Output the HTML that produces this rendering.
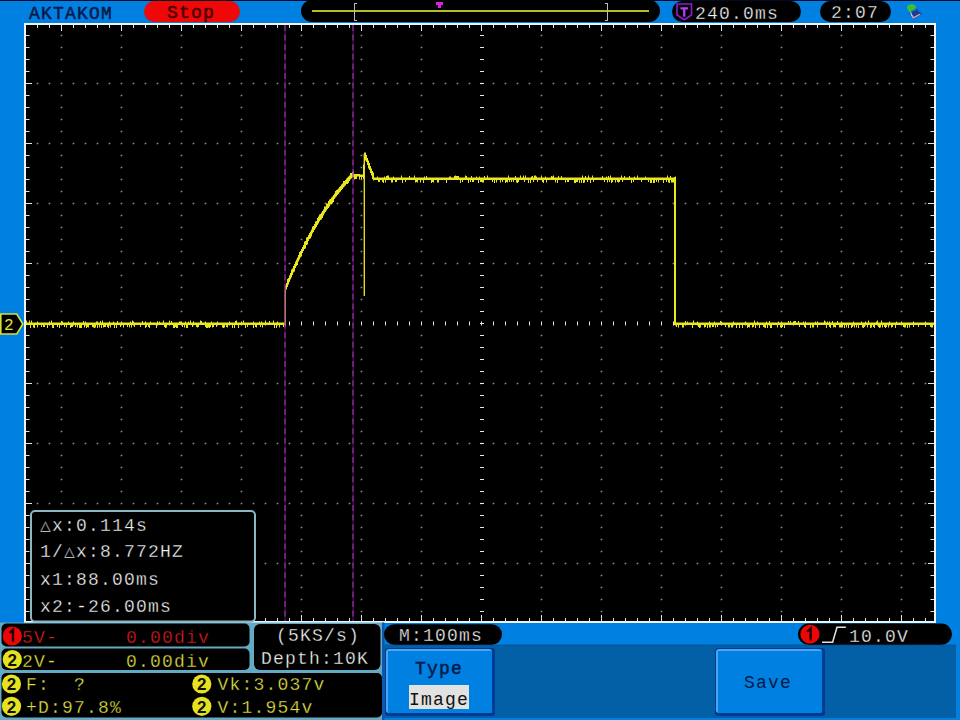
<!DOCTYPE html>
<html><head><meta charset="utf-8"><style>
html,body{margin:0;padding:0;width:960px;height:720px;overflow:hidden;background:#0080e0;}
svg{position:absolute;left:0;top:0;}
text{font-family:"Liberation Mono",monospace;font-size:18px;letter-spacing:1.2px;}
</style></head><body>
<svg width="960" height="720" viewBox="0 0 960 720">
<rect x="0" y="0" width="960" height="720" fill="#0080e0"/>
<rect x="0" y="0" width="960" height="1" fill="#000a24"/>
<!-- top bar -->
<text x="29" y="19" fill="#06184a" stroke="#06184a" stroke-width="0.5" xml:space="preserve">AKTAKOM</text>
<rect x="144" y="1" width="96" height="21" rx="10.5" fill="#ee0808"/>
<text x="167" y="18" fill="#480000" stroke="#480000" stroke-width="0.5" xml:space="preserve">Stop</text>
<rect x="301" y="0" width="359" height="22" rx="11" fill="#000"/>
<rect x="312" y="10" width="337" height="2" fill="#b4bc28"/>
<path d="M354 3h3v1h-2v16h2v1h-3z" fill="#bcbcbc"/>
<path d="M605 3h3v18h-3v-1h2v-16h-2z" fill="#bcbcbc"/>
<path d="M436 2h7v3h-2v3h-3v-3h-2z" fill="#e020e0"/>
<rect x="672" y="1" width="129" height="21" rx="10.5" fill="#000"/>
<path d="M677 4h14.5v11l-7.25 4.8l-7.25-4.8z" fill="none" stroke="#8a1cc8" stroke-width="1.7"/>
<path d="M680.5 7.2h7.5v2.2h-2.6v7.4h-2.3v-7.4h-2.6z" fill="#b040f0"/>
<text x="695" y="19" fill="#f2f2f2" stroke="#000" stroke-width="0.3" xml:space="preserve">240.0ms</text>
<rect x="820" y="1" width="71" height="21" rx="10.5" fill="#000"/>
<text x="831" y="18" fill="#f2f2f2" stroke="#000" stroke-width="0.3" xml:space="preserve">2:07</text>
<path d="M909.5 13L917 9.5L921.5 14L913 19z" fill="#1c3c8c" stroke="#1a58b8" stroke-width="1.2"/>
<path d="M911 13.8L913.2 17.8L920 14.2" fill="none" stroke="#d8a8bc" stroke-width="1.3"/>
<path d="M910.2 11L912.2 16.5" fill="none" stroke="#b8d8e0" stroke-width="1"/>
<path d="M907 6.5Q908.5 3.8 912 4.3Q915.5 4 916 7Q915 10.2 911.5 10.5L910.3 12.5Q907 10.5 907 6.5z" fill="#3cc030"/>
<!-- screen -->
<rect x="24" y="23" width="912" height="600" fill="#f2f2f2"/>
<rect x="26" y="25" width="908" height="596" fill="#000"/>
<path d="M60.65 34.65h1.7v1.7h-1.7zM60.65 46.65h1.7v1.7h-1.7zM60.65 58.65h1.7v1.7h-1.7zM60.65 70.65h1.7v1.7h-1.7zM60.65 94.65h1.7v1.7h-1.7zM60.65 106.65h1.7v1.7h-1.7zM60.65 118.65h1.7v1.7h-1.7zM60.65 130.65h1.7v1.7h-1.7zM60.65 154.65h1.7v1.7h-1.7zM60.65 166.65h1.7v1.7h-1.7zM60.65 178.65h1.7v1.7h-1.7zM60.65 190.65h1.7v1.7h-1.7zM60.65 214.65h1.7v1.7h-1.7zM60.65 226.65h1.7v1.7h-1.7zM60.65 238.65h1.7v1.7h-1.7zM60.65 250.65h1.7v1.7h-1.7zM60.65 274.65h1.7v1.7h-1.7zM60.65 286.65h1.7v1.7h-1.7zM60.65 298.65h1.7v1.7h-1.7zM60.65 310.65h1.7v1.7h-1.7zM60.65 334.65h1.7v1.7h-1.7zM60.65 346.65h1.7v1.7h-1.7zM60.65 358.65h1.7v1.7h-1.7zM60.65 370.65h1.7v1.7h-1.7zM60.65 394.65h1.7v1.7h-1.7zM60.65 406.65h1.7v1.7h-1.7zM60.65 418.65h1.7v1.7h-1.7zM60.65 430.65h1.7v1.7h-1.7zM60.65 454.65h1.7v1.7h-1.7zM60.65 466.65h1.7v1.7h-1.7zM60.65 478.65h1.7v1.7h-1.7zM60.65 490.65h1.7v1.7h-1.7zM60.65 514.65h1.7v1.7h-1.7zM60.65 526.65h1.7v1.7h-1.7zM60.65 538.65h1.7v1.7h-1.7zM60.65 550.65h1.7v1.7h-1.7zM60.65 574.65h1.7v1.7h-1.7zM60.65 586.65h1.7v1.7h-1.7zM60.65 598.65h1.7v1.7h-1.7zM60.65 610.65h1.7v1.7h-1.7zM120.65 34.65h1.7v1.7h-1.7zM120.65 46.65h1.7v1.7h-1.7zM120.65 58.65h1.7v1.7h-1.7zM120.65 70.65h1.7v1.7h-1.7zM120.65 94.65h1.7v1.7h-1.7zM120.65 106.65h1.7v1.7h-1.7zM120.65 118.65h1.7v1.7h-1.7zM120.65 130.65h1.7v1.7h-1.7zM120.65 154.65h1.7v1.7h-1.7zM120.65 166.65h1.7v1.7h-1.7zM120.65 178.65h1.7v1.7h-1.7zM120.65 190.65h1.7v1.7h-1.7zM120.65 214.65h1.7v1.7h-1.7zM120.65 226.65h1.7v1.7h-1.7zM120.65 238.65h1.7v1.7h-1.7zM120.65 250.65h1.7v1.7h-1.7zM120.65 274.65h1.7v1.7h-1.7zM120.65 286.65h1.7v1.7h-1.7zM120.65 298.65h1.7v1.7h-1.7zM120.65 310.65h1.7v1.7h-1.7zM120.65 334.65h1.7v1.7h-1.7zM120.65 346.65h1.7v1.7h-1.7zM120.65 358.65h1.7v1.7h-1.7zM120.65 370.65h1.7v1.7h-1.7zM120.65 394.65h1.7v1.7h-1.7zM120.65 406.65h1.7v1.7h-1.7zM120.65 418.65h1.7v1.7h-1.7zM120.65 430.65h1.7v1.7h-1.7zM120.65 454.65h1.7v1.7h-1.7zM120.65 466.65h1.7v1.7h-1.7zM120.65 478.65h1.7v1.7h-1.7zM120.65 490.65h1.7v1.7h-1.7zM120.65 514.65h1.7v1.7h-1.7zM120.65 526.65h1.7v1.7h-1.7zM120.65 538.65h1.7v1.7h-1.7zM120.65 550.65h1.7v1.7h-1.7zM120.65 574.65h1.7v1.7h-1.7zM120.65 586.65h1.7v1.7h-1.7zM120.65 598.65h1.7v1.7h-1.7zM120.65 610.65h1.7v1.7h-1.7zM180.65 34.65h1.7v1.7h-1.7zM180.65 46.65h1.7v1.7h-1.7zM180.65 58.65h1.7v1.7h-1.7zM180.65 70.65h1.7v1.7h-1.7zM180.65 94.65h1.7v1.7h-1.7zM180.65 106.65h1.7v1.7h-1.7zM180.65 118.65h1.7v1.7h-1.7zM180.65 130.65h1.7v1.7h-1.7zM180.65 154.65h1.7v1.7h-1.7zM180.65 166.65h1.7v1.7h-1.7zM180.65 178.65h1.7v1.7h-1.7zM180.65 190.65h1.7v1.7h-1.7zM180.65 214.65h1.7v1.7h-1.7zM180.65 226.65h1.7v1.7h-1.7zM180.65 238.65h1.7v1.7h-1.7zM180.65 250.65h1.7v1.7h-1.7zM180.65 274.65h1.7v1.7h-1.7zM180.65 286.65h1.7v1.7h-1.7zM180.65 298.65h1.7v1.7h-1.7zM180.65 310.65h1.7v1.7h-1.7zM180.65 334.65h1.7v1.7h-1.7zM180.65 346.65h1.7v1.7h-1.7zM180.65 358.65h1.7v1.7h-1.7zM180.65 370.65h1.7v1.7h-1.7zM180.65 394.65h1.7v1.7h-1.7zM180.65 406.65h1.7v1.7h-1.7zM180.65 418.65h1.7v1.7h-1.7zM180.65 430.65h1.7v1.7h-1.7zM180.65 454.65h1.7v1.7h-1.7zM180.65 466.65h1.7v1.7h-1.7zM180.65 478.65h1.7v1.7h-1.7zM180.65 490.65h1.7v1.7h-1.7zM180.65 514.65h1.7v1.7h-1.7zM180.65 526.65h1.7v1.7h-1.7zM180.65 538.65h1.7v1.7h-1.7zM180.65 550.65h1.7v1.7h-1.7zM180.65 574.65h1.7v1.7h-1.7zM180.65 586.65h1.7v1.7h-1.7zM180.65 598.65h1.7v1.7h-1.7zM180.65 610.65h1.7v1.7h-1.7zM240.65 34.65h1.7v1.7h-1.7zM240.65 46.65h1.7v1.7h-1.7zM240.65 58.65h1.7v1.7h-1.7zM240.65 70.65h1.7v1.7h-1.7zM240.65 94.65h1.7v1.7h-1.7zM240.65 106.65h1.7v1.7h-1.7zM240.65 118.65h1.7v1.7h-1.7zM240.65 130.65h1.7v1.7h-1.7zM240.65 154.65h1.7v1.7h-1.7zM240.65 166.65h1.7v1.7h-1.7zM240.65 178.65h1.7v1.7h-1.7zM240.65 190.65h1.7v1.7h-1.7zM240.65 214.65h1.7v1.7h-1.7zM240.65 226.65h1.7v1.7h-1.7zM240.65 238.65h1.7v1.7h-1.7zM240.65 250.65h1.7v1.7h-1.7zM240.65 274.65h1.7v1.7h-1.7zM240.65 286.65h1.7v1.7h-1.7zM240.65 298.65h1.7v1.7h-1.7zM240.65 310.65h1.7v1.7h-1.7zM240.65 334.65h1.7v1.7h-1.7zM240.65 346.65h1.7v1.7h-1.7zM240.65 358.65h1.7v1.7h-1.7zM240.65 370.65h1.7v1.7h-1.7zM240.65 394.65h1.7v1.7h-1.7zM240.65 406.65h1.7v1.7h-1.7zM240.65 418.65h1.7v1.7h-1.7zM240.65 430.65h1.7v1.7h-1.7zM240.65 454.65h1.7v1.7h-1.7zM240.65 466.65h1.7v1.7h-1.7zM240.65 478.65h1.7v1.7h-1.7zM240.65 490.65h1.7v1.7h-1.7zM240.65 514.65h1.7v1.7h-1.7zM240.65 526.65h1.7v1.7h-1.7zM240.65 538.65h1.7v1.7h-1.7zM240.65 550.65h1.7v1.7h-1.7zM240.65 574.65h1.7v1.7h-1.7zM240.65 586.65h1.7v1.7h-1.7zM240.65 598.65h1.7v1.7h-1.7zM240.65 610.65h1.7v1.7h-1.7zM300.65 34.65h1.7v1.7h-1.7zM300.65 46.65h1.7v1.7h-1.7zM300.65 58.65h1.7v1.7h-1.7zM300.65 70.65h1.7v1.7h-1.7zM300.65 94.65h1.7v1.7h-1.7zM300.65 106.65h1.7v1.7h-1.7zM300.65 118.65h1.7v1.7h-1.7zM300.65 130.65h1.7v1.7h-1.7zM300.65 154.65h1.7v1.7h-1.7zM300.65 166.65h1.7v1.7h-1.7zM300.65 178.65h1.7v1.7h-1.7zM300.65 190.65h1.7v1.7h-1.7zM300.65 214.65h1.7v1.7h-1.7zM300.65 226.65h1.7v1.7h-1.7zM300.65 238.65h1.7v1.7h-1.7zM300.65 250.65h1.7v1.7h-1.7zM300.65 274.65h1.7v1.7h-1.7zM300.65 286.65h1.7v1.7h-1.7zM300.65 298.65h1.7v1.7h-1.7zM300.65 310.65h1.7v1.7h-1.7zM300.65 334.65h1.7v1.7h-1.7zM300.65 346.65h1.7v1.7h-1.7zM300.65 358.65h1.7v1.7h-1.7zM300.65 370.65h1.7v1.7h-1.7zM300.65 394.65h1.7v1.7h-1.7zM300.65 406.65h1.7v1.7h-1.7zM300.65 418.65h1.7v1.7h-1.7zM300.65 430.65h1.7v1.7h-1.7zM300.65 454.65h1.7v1.7h-1.7zM300.65 466.65h1.7v1.7h-1.7zM300.65 478.65h1.7v1.7h-1.7zM300.65 490.65h1.7v1.7h-1.7zM300.65 514.65h1.7v1.7h-1.7zM300.65 526.65h1.7v1.7h-1.7zM300.65 538.65h1.7v1.7h-1.7zM300.65 550.65h1.7v1.7h-1.7zM300.65 574.65h1.7v1.7h-1.7zM300.65 586.65h1.7v1.7h-1.7zM300.65 598.65h1.7v1.7h-1.7zM300.65 610.65h1.7v1.7h-1.7zM360.65 34.65h1.7v1.7h-1.7zM360.65 46.65h1.7v1.7h-1.7zM360.65 58.65h1.7v1.7h-1.7zM360.65 70.65h1.7v1.7h-1.7zM360.65 94.65h1.7v1.7h-1.7zM360.65 106.65h1.7v1.7h-1.7zM360.65 118.65h1.7v1.7h-1.7zM360.65 130.65h1.7v1.7h-1.7zM360.65 154.65h1.7v1.7h-1.7zM360.65 166.65h1.7v1.7h-1.7zM360.65 178.65h1.7v1.7h-1.7zM360.65 190.65h1.7v1.7h-1.7zM360.65 214.65h1.7v1.7h-1.7zM360.65 226.65h1.7v1.7h-1.7zM360.65 238.65h1.7v1.7h-1.7zM360.65 250.65h1.7v1.7h-1.7zM360.65 274.65h1.7v1.7h-1.7zM360.65 286.65h1.7v1.7h-1.7zM360.65 298.65h1.7v1.7h-1.7zM360.65 310.65h1.7v1.7h-1.7zM360.65 334.65h1.7v1.7h-1.7zM360.65 346.65h1.7v1.7h-1.7zM360.65 358.65h1.7v1.7h-1.7zM360.65 370.65h1.7v1.7h-1.7zM360.65 394.65h1.7v1.7h-1.7zM360.65 406.65h1.7v1.7h-1.7zM360.65 418.65h1.7v1.7h-1.7zM360.65 430.65h1.7v1.7h-1.7zM360.65 454.65h1.7v1.7h-1.7zM360.65 466.65h1.7v1.7h-1.7zM360.65 478.65h1.7v1.7h-1.7zM360.65 490.65h1.7v1.7h-1.7zM360.65 514.65h1.7v1.7h-1.7zM360.65 526.65h1.7v1.7h-1.7zM360.65 538.65h1.7v1.7h-1.7zM360.65 550.65h1.7v1.7h-1.7zM360.65 574.65h1.7v1.7h-1.7zM360.65 586.65h1.7v1.7h-1.7zM360.65 598.65h1.7v1.7h-1.7zM360.65 610.65h1.7v1.7h-1.7zM420.65 34.65h1.7v1.7h-1.7zM420.65 46.65h1.7v1.7h-1.7zM420.65 58.65h1.7v1.7h-1.7zM420.65 70.65h1.7v1.7h-1.7zM420.65 94.65h1.7v1.7h-1.7zM420.65 106.65h1.7v1.7h-1.7zM420.65 118.65h1.7v1.7h-1.7zM420.65 130.65h1.7v1.7h-1.7zM420.65 154.65h1.7v1.7h-1.7zM420.65 166.65h1.7v1.7h-1.7zM420.65 178.65h1.7v1.7h-1.7zM420.65 190.65h1.7v1.7h-1.7zM420.65 214.65h1.7v1.7h-1.7zM420.65 226.65h1.7v1.7h-1.7zM420.65 238.65h1.7v1.7h-1.7zM420.65 250.65h1.7v1.7h-1.7zM420.65 274.65h1.7v1.7h-1.7zM420.65 286.65h1.7v1.7h-1.7zM420.65 298.65h1.7v1.7h-1.7zM420.65 310.65h1.7v1.7h-1.7zM420.65 334.65h1.7v1.7h-1.7zM420.65 346.65h1.7v1.7h-1.7zM420.65 358.65h1.7v1.7h-1.7zM420.65 370.65h1.7v1.7h-1.7zM420.65 394.65h1.7v1.7h-1.7zM420.65 406.65h1.7v1.7h-1.7zM420.65 418.65h1.7v1.7h-1.7zM420.65 430.65h1.7v1.7h-1.7zM420.65 454.65h1.7v1.7h-1.7zM420.65 466.65h1.7v1.7h-1.7zM420.65 478.65h1.7v1.7h-1.7zM420.65 490.65h1.7v1.7h-1.7zM420.65 514.65h1.7v1.7h-1.7zM420.65 526.65h1.7v1.7h-1.7zM420.65 538.65h1.7v1.7h-1.7zM420.65 550.65h1.7v1.7h-1.7zM420.65 574.65h1.7v1.7h-1.7zM420.65 586.65h1.7v1.7h-1.7zM420.65 598.65h1.7v1.7h-1.7zM420.65 610.65h1.7v1.7h-1.7zM540.65 34.65h1.7v1.7h-1.7zM540.65 46.65h1.7v1.7h-1.7zM540.65 58.65h1.7v1.7h-1.7zM540.65 70.65h1.7v1.7h-1.7zM540.65 94.65h1.7v1.7h-1.7zM540.65 106.65h1.7v1.7h-1.7zM540.65 118.65h1.7v1.7h-1.7zM540.65 130.65h1.7v1.7h-1.7zM540.65 154.65h1.7v1.7h-1.7zM540.65 166.65h1.7v1.7h-1.7zM540.65 178.65h1.7v1.7h-1.7zM540.65 190.65h1.7v1.7h-1.7zM540.65 214.65h1.7v1.7h-1.7zM540.65 226.65h1.7v1.7h-1.7zM540.65 238.65h1.7v1.7h-1.7zM540.65 250.65h1.7v1.7h-1.7zM540.65 274.65h1.7v1.7h-1.7zM540.65 286.65h1.7v1.7h-1.7zM540.65 298.65h1.7v1.7h-1.7zM540.65 310.65h1.7v1.7h-1.7zM540.65 334.65h1.7v1.7h-1.7zM540.65 346.65h1.7v1.7h-1.7zM540.65 358.65h1.7v1.7h-1.7zM540.65 370.65h1.7v1.7h-1.7zM540.65 394.65h1.7v1.7h-1.7zM540.65 406.65h1.7v1.7h-1.7zM540.65 418.65h1.7v1.7h-1.7zM540.65 430.65h1.7v1.7h-1.7zM540.65 454.65h1.7v1.7h-1.7zM540.65 466.65h1.7v1.7h-1.7zM540.65 478.65h1.7v1.7h-1.7zM540.65 490.65h1.7v1.7h-1.7zM540.65 514.65h1.7v1.7h-1.7zM540.65 526.65h1.7v1.7h-1.7zM540.65 538.65h1.7v1.7h-1.7zM540.65 550.65h1.7v1.7h-1.7zM540.65 574.65h1.7v1.7h-1.7zM540.65 586.65h1.7v1.7h-1.7zM540.65 598.65h1.7v1.7h-1.7zM540.65 610.65h1.7v1.7h-1.7zM600.65 34.65h1.7v1.7h-1.7zM600.65 46.65h1.7v1.7h-1.7zM600.65 58.65h1.7v1.7h-1.7zM600.65 70.65h1.7v1.7h-1.7zM600.65 94.65h1.7v1.7h-1.7zM600.65 106.65h1.7v1.7h-1.7zM600.65 118.65h1.7v1.7h-1.7zM600.65 130.65h1.7v1.7h-1.7zM600.65 154.65h1.7v1.7h-1.7zM600.65 166.65h1.7v1.7h-1.7zM600.65 178.65h1.7v1.7h-1.7zM600.65 190.65h1.7v1.7h-1.7zM600.65 214.65h1.7v1.7h-1.7zM600.65 226.65h1.7v1.7h-1.7zM600.65 238.65h1.7v1.7h-1.7zM600.65 250.65h1.7v1.7h-1.7zM600.65 274.65h1.7v1.7h-1.7zM600.65 286.65h1.7v1.7h-1.7zM600.65 298.65h1.7v1.7h-1.7zM600.65 310.65h1.7v1.7h-1.7zM600.65 334.65h1.7v1.7h-1.7zM600.65 346.65h1.7v1.7h-1.7zM600.65 358.65h1.7v1.7h-1.7zM600.65 370.65h1.7v1.7h-1.7zM600.65 394.65h1.7v1.7h-1.7zM600.65 406.65h1.7v1.7h-1.7zM600.65 418.65h1.7v1.7h-1.7zM600.65 430.65h1.7v1.7h-1.7zM600.65 454.65h1.7v1.7h-1.7zM600.65 466.65h1.7v1.7h-1.7zM600.65 478.65h1.7v1.7h-1.7zM600.65 490.65h1.7v1.7h-1.7zM600.65 514.65h1.7v1.7h-1.7zM600.65 526.65h1.7v1.7h-1.7zM600.65 538.65h1.7v1.7h-1.7zM600.65 550.65h1.7v1.7h-1.7zM600.65 574.65h1.7v1.7h-1.7zM600.65 586.65h1.7v1.7h-1.7zM600.65 598.65h1.7v1.7h-1.7zM600.65 610.65h1.7v1.7h-1.7zM660.65 34.65h1.7v1.7h-1.7zM660.65 46.65h1.7v1.7h-1.7zM660.65 58.65h1.7v1.7h-1.7zM660.65 70.65h1.7v1.7h-1.7zM660.65 94.65h1.7v1.7h-1.7zM660.65 106.65h1.7v1.7h-1.7zM660.65 118.65h1.7v1.7h-1.7zM660.65 130.65h1.7v1.7h-1.7zM660.65 154.65h1.7v1.7h-1.7zM660.65 166.65h1.7v1.7h-1.7zM660.65 178.65h1.7v1.7h-1.7zM660.65 190.65h1.7v1.7h-1.7zM660.65 214.65h1.7v1.7h-1.7zM660.65 226.65h1.7v1.7h-1.7zM660.65 238.65h1.7v1.7h-1.7zM660.65 250.65h1.7v1.7h-1.7zM660.65 274.65h1.7v1.7h-1.7zM660.65 286.65h1.7v1.7h-1.7zM660.65 298.65h1.7v1.7h-1.7zM660.65 310.65h1.7v1.7h-1.7zM660.65 334.65h1.7v1.7h-1.7zM660.65 346.65h1.7v1.7h-1.7zM660.65 358.65h1.7v1.7h-1.7zM660.65 370.65h1.7v1.7h-1.7zM660.65 394.65h1.7v1.7h-1.7zM660.65 406.65h1.7v1.7h-1.7zM660.65 418.65h1.7v1.7h-1.7zM660.65 430.65h1.7v1.7h-1.7zM660.65 454.65h1.7v1.7h-1.7zM660.65 466.65h1.7v1.7h-1.7zM660.65 478.65h1.7v1.7h-1.7zM660.65 490.65h1.7v1.7h-1.7zM660.65 514.65h1.7v1.7h-1.7zM660.65 526.65h1.7v1.7h-1.7zM660.65 538.65h1.7v1.7h-1.7zM660.65 550.65h1.7v1.7h-1.7zM660.65 574.65h1.7v1.7h-1.7zM660.65 586.65h1.7v1.7h-1.7zM660.65 598.65h1.7v1.7h-1.7zM660.65 610.65h1.7v1.7h-1.7zM720.65 34.65h1.7v1.7h-1.7zM720.65 46.65h1.7v1.7h-1.7zM720.65 58.65h1.7v1.7h-1.7zM720.65 70.65h1.7v1.7h-1.7zM720.65 94.65h1.7v1.7h-1.7zM720.65 106.65h1.7v1.7h-1.7zM720.65 118.65h1.7v1.7h-1.7zM720.65 130.65h1.7v1.7h-1.7zM720.65 154.65h1.7v1.7h-1.7zM720.65 166.65h1.7v1.7h-1.7zM720.65 178.65h1.7v1.7h-1.7zM720.65 190.65h1.7v1.7h-1.7zM720.65 214.65h1.7v1.7h-1.7zM720.65 226.65h1.7v1.7h-1.7zM720.65 238.65h1.7v1.7h-1.7zM720.65 250.65h1.7v1.7h-1.7zM720.65 274.65h1.7v1.7h-1.7zM720.65 286.65h1.7v1.7h-1.7zM720.65 298.65h1.7v1.7h-1.7zM720.65 310.65h1.7v1.7h-1.7zM720.65 334.65h1.7v1.7h-1.7zM720.65 346.65h1.7v1.7h-1.7zM720.65 358.65h1.7v1.7h-1.7zM720.65 370.65h1.7v1.7h-1.7zM720.65 394.65h1.7v1.7h-1.7zM720.65 406.65h1.7v1.7h-1.7zM720.65 418.65h1.7v1.7h-1.7zM720.65 430.65h1.7v1.7h-1.7zM720.65 454.65h1.7v1.7h-1.7zM720.65 466.65h1.7v1.7h-1.7zM720.65 478.65h1.7v1.7h-1.7zM720.65 490.65h1.7v1.7h-1.7zM720.65 514.65h1.7v1.7h-1.7zM720.65 526.65h1.7v1.7h-1.7zM720.65 538.65h1.7v1.7h-1.7zM720.65 550.65h1.7v1.7h-1.7zM720.65 574.65h1.7v1.7h-1.7zM720.65 586.65h1.7v1.7h-1.7zM720.65 598.65h1.7v1.7h-1.7zM720.65 610.65h1.7v1.7h-1.7zM780.65 34.65h1.7v1.7h-1.7zM780.65 46.65h1.7v1.7h-1.7zM780.65 58.65h1.7v1.7h-1.7zM780.65 70.65h1.7v1.7h-1.7zM780.65 94.65h1.7v1.7h-1.7zM780.65 106.65h1.7v1.7h-1.7zM780.65 118.65h1.7v1.7h-1.7zM780.65 130.65h1.7v1.7h-1.7zM780.65 154.65h1.7v1.7h-1.7zM780.65 166.65h1.7v1.7h-1.7zM780.65 178.65h1.7v1.7h-1.7zM780.65 190.65h1.7v1.7h-1.7zM780.65 214.65h1.7v1.7h-1.7zM780.65 226.65h1.7v1.7h-1.7zM780.65 238.65h1.7v1.7h-1.7zM780.65 250.65h1.7v1.7h-1.7zM780.65 274.65h1.7v1.7h-1.7zM780.65 286.65h1.7v1.7h-1.7zM780.65 298.65h1.7v1.7h-1.7zM780.65 310.65h1.7v1.7h-1.7zM780.65 334.65h1.7v1.7h-1.7zM780.65 346.65h1.7v1.7h-1.7zM780.65 358.65h1.7v1.7h-1.7zM780.65 370.65h1.7v1.7h-1.7zM780.65 394.65h1.7v1.7h-1.7zM780.65 406.65h1.7v1.7h-1.7zM780.65 418.65h1.7v1.7h-1.7zM780.65 430.65h1.7v1.7h-1.7zM780.65 454.65h1.7v1.7h-1.7zM780.65 466.65h1.7v1.7h-1.7zM780.65 478.65h1.7v1.7h-1.7zM780.65 490.65h1.7v1.7h-1.7zM780.65 514.65h1.7v1.7h-1.7zM780.65 526.65h1.7v1.7h-1.7zM780.65 538.65h1.7v1.7h-1.7zM780.65 550.65h1.7v1.7h-1.7zM780.65 574.65h1.7v1.7h-1.7zM780.65 586.65h1.7v1.7h-1.7zM780.65 598.65h1.7v1.7h-1.7zM780.65 610.65h1.7v1.7h-1.7zM840.65 34.65h1.7v1.7h-1.7zM840.65 46.65h1.7v1.7h-1.7zM840.65 58.65h1.7v1.7h-1.7zM840.65 70.65h1.7v1.7h-1.7zM840.65 94.65h1.7v1.7h-1.7zM840.65 106.65h1.7v1.7h-1.7zM840.65 118.65h1.7v1.7h-1.7zM840.65 130.65h1.7v1.7h-1.7zM840.65 154.65h1.7v1.7h-1.7zM840.65 166.65h1.7v1.7h-1.7zM840.65 178.65h1.7v1.7h-1.7zM840.65 190.65h1.7v1.7h-1.7zM840.65 214.65h1.7v1.7h-1.7zM840.65 226.65h1.7v1.7h-1.7zM840.65 238.65h1.7v1.7h-1.7zM840.65 250.65h1.7v1.7h-1.7zM840.65 274.65h1.7v1.7h-1.7zM840.65 286.65h1.7v1.7h-1.7zM840.65 298.65h1.7v1.7h-1.7zM840.65 310.65h1.7v1.7h-1.7zM840.65 334.65h1.7v1.7h-1.7zM840.65 346.65h1.7v1.7h-1.7zM840.65 358.65h1.7v1.7h-1.7zM840.65 370.65h1.7v1.7h-1.7zM840.65 394.65h1.7v1.7h-1.7zM840.65 406.65h1.7v1.7h-1.7zM840.65 418.65h1.7v1.7h-1.7zM840.65 430.65h1.7v1.7h-1.7zM840.65 454.65h1.7v1.7h-1.7zM840.65 466.65h1.7v1.7h-1.7zM840.65 478.65h1.7v1.7h-1.7zM840.65 490.65h1.7v1.7h-1.7zM840.65 514.65h1.7v1.7h-1.7zM840.65 526.65h1.7v1.7h-1.7zM840.65 538.65h1.7v1.7h-1.7zM840.65 550.65h1.7v1.7h-1.7zM840.65 574.65h1.7v1.7h-1.7zM840.65 586.65h1.7v1.7h-1.7zM840.65 598.65h1.7v1.7h-1.7zM840.65 610.65h1.7v1.7h-1.7zM900.65 34.65h1.7v1.7h-1.7zM900.65 46.65h1.7v1.7h-1.7zM900.65 58.65h1.7v1.7h-1.7zM900.65 70.65h1.7v1.7h-1.7zM900.65 94.65h1.7v1.7h-1.7zM900.65 106.65h1.7v1.7h-1.7zM900.65 118.65h1.7v1.7h-1.7zM900.65 130.65h1.7v1.7h-1.7zM900.65 154.65h1.7v1.7h-1.7zM900.65 166.65h1.7v1.7h-1.7zM900.65 178.65h1.7v1.7h-1.7zM900.65 190.65h1.7v1.7h-1.7zM900.65 214.65h1.7v1.7h-1.7zM900.65 226.65h1.7v1.7h-1.7zM900.65 238.65h1.7v1.7h-1.7zM900.65 250.65h1.7v1.7h-1.7zM900.65 274.65h1.7v1.7h-1.7zM900.65 286.65h1.7v1.7h-1.7zM900.65 298.65h1.7v1.7h-1.7zM900.65 310.65h1.7v1.7h-1.7zM900.65 334.65h1.7v1.7h-1.7zM900.65 346.65h1.7v1.7h-1.7zM900.65 358.65h1.7v1.7h-1.7zM900.65 370.65h1.7v1.7h-1.7zM900.65 394.65h1.7v1.7h-1.7zM900.65 406.65h1.7v1.7h-1.7zM900.65 418.65h1.7v1.7h-1.7zM900.65 430.65h1.7v1.7h-1.7zM900.65 454.65h1.7v1.7h-1.7zM900.65 466.65h1.7v1.7h-1.7zM900.65 478.65h1.7v1.7h-1.7zM900.65 490.65h1.7v1.7h-1.7zM900.65 514.65h1.7v1.7h-1.7zM900.65 526.65h1.7v1.7h-1.7zM900.65 538.65h1.7v1.7h-1.7zM900.65 550.65h1.7v1.7h-1.7zM900.65 574.65h1.7v1.7h-1.7zM900.65 586.65h1.7v1.7h-1.7zM900.65 598.65h1.7v1.7h-1.7zM900.65 610.65h1.7v1.7h-1.7zM36.65 82.65h1.7v1.7h-1.7zM48.65 82.65h1.7v1.7h-1.7zM60.65 82.65h1.7v1.7h-1.7zM72.65 82.65h1.7v1.7h-1.7zM84.65 82.65h1.7v1.7h-1.7zM96.65 82.65h1.7v1.7h-1.7zM108.65 82.65h1.7v1.7h-1.7zM120.65 82.65h1.7v1.7h-1.7zM132.65 82.65h1.7v1.7h-1.7zM144.65 82.65h1.7v1.7h-1.7zM156.65 82.65h1.7v1.7h-1.7zM168.65 82.65h1.7v1.7h-1.7zM180.65 82.65h1.7v1.7h-1.7zM192.65 82.65h1.7v1.7h-1.7zM204.65 82.65h1.7v1.7h-1.7zM216.65 82.65h1.7v1.7h-1.7zM228.65 82.65h1.7v1.7h-1.7zM240.65 82.65h1.7v1.7h-1.7zM252.65 82.65h1.7v1.7h-1.7zM264.65 82.65h1.7v1.7h-1.7zM276.65 82.65h1.7v1.7h-1.7zM288.65 82.65h1.7v1.7h-1.7zM300.65 82.65h1.7v1.7h-1.7zM312.65 82.65h1.7v1.7h-1.7zM324.65 82.65h1.7v1.7h-1.7zM336.65 82.65h1.7v1.7h-1.7zM348.65 82.65h1.7v1.7h-1.7zM360.65 82.65h1.7v1.7h-1.7zM372.65 82.65h1.7v1.7h-1.7zM384.65 82.65h1.7v1.7h-1.7zM396.65 82.65h1.7v1.7h-1.7zM408.65 82.65h1.7v1.7h-1.7zM420.65 82.65h1.7v1.7h-1.7zM432.65 82.65h1.7v1.7h-1.7zM444.65 82.65h1.7v1.7h-1.7zM456.65 82.65h1.7v1.7h-1.7zM468.65 82.65h1.7v1.7h-1.7zM480.65 82.65h1.7v1.7h-1.7zM492.65 82.65h1.7v1.7h-1.7zM504.65 82.65h1.7v1.7h-1.7zM516.65 82.65h1.7v1.7h-1.7zM528.65 82.65h1.7v1.7h-1.7zM540.65 82.65h1.7v1.7h-1.7zM552.65 82.65h1.7v1.7h-1.7zM564.65 82.65h1.7v1.7h-1.7zM576.65 82.65h1.7v1.7h-1.7zM588.65 82.65h1.7v1.7h-1.7zM600.65 82.65h1.7v1.7h-1.7zM612.65 82.65h1.7v1.7h-1.7zM624.65 82.65h1.7v1.7h-1.7zM636.65 82.65h1.7v1.7h-1.7zM648.65 82.65h1.7v1.7h-1.7zM660.65 82.65h1.7v1.7h-1.7zM672.65 82.65h1.7v1.7h-1.7zM684.65 82.65h1.7v1.7h-1.7zM696.65 82.65h1.7v1.7h-1.7zM708.65 82.65h1.7v1.7h-1.7zM720.65 82.65h1.7v1.7h-1.7zM732.65 82.65h1.7v1.7h-1.7zM744.65 82.65h1.7v1.7h-1.7zM756.65 82.65h1.7v1.7h-1.7zM768.65 82.65h1.7v1.7h-1.7zM780.65 82.65h1.7v1.7h-1.7zM792.65 82.65h1.7v1.7h-1.7zM804.65 82.65h1.7v1.7h-1.7zM816.65 82.65h1.7v1.7h-1.7zM828.65 82.65h1.7v1.7h-1.7zM840.65 82.65h1.7v1.7h-1.7zM852.65 82.65h1.7v1.7h-1.7zM864.65 82.65h1.7v1.7h-1.7zM876.65 82.65h1.7v1.7h-1.7zM888.65 82.65h1.7v1.7h-1.7zM900.65 82.65h1.7v1.7h-1.7zM912.65 82.65h1.7v1.7h-1.7zM924.65 82.65h1.7v1.7h-1.7zM36.65 142.65h1.7v1.7h-1.7zM48.65 142.65h1.7v1.7h-1.7zM60.65 142.65h1.7v1.7h-1.7zM72.65 142.65h1.7v1.7h-1.7zM84.65 142.65h1.7v1.7h-1.7zM96.65 142.65h1.7v1.7h-1.7zM108.65 142.65h1.7v1.7h-1.7zM120.65 142.65h1.7v1.7h-1.7zM132.65 142.65h1.7v1.7h-1.7zM144.65 142.65h1.7v1.7h-1.7zM156.65 142.65h1.7v1.7h-1.7zM168.65 142.65h1.7v1.7h-1.7zM180.65 142.65h1.7v1.7h-1.7zM192.65 142.65h1.7v1.7h-1.7zM204.65 142.65h1.7v1.7h-1.7zM216.65 142.65h1.7v1.7h-1.7zM228.65 142.65h1.7v1.7h-1.7zM240.65 142.65h1.7v1.7h-1.7zM252.65 142.65h1.7v1.7h-1.7zM264.65 142.65h1.7v1.7h-1.7zM276.65 142.65h1.7v1.7h-1.7zM288.65 142.65h1.7v1.7h-1.7zM300.65 142.65h1.7v1.7h-1.7zM312.65 142.65h1.7v1.7h-1.7zM324.65 142.65h1.7v1.7h-1.7zM336.65 142.65h1.7v1.7h-1.7zM348.65 142.65h1.7v1.7h-1.7zM360.65 142.65h1.7v1.7h-1.7zM372.65 142.65h1.7v1.7h-1.7zM384.65 142.65h1.7v1.7h-1.7zM396.65 142.65h1.7v1.7h-1.7zM408.65 142.65h1.7v1.7h-1.7zM420.65 142.65h1.7v1.7h-1.7zM432.65 142.65h1.7v1.7h-1.7zM444.65 142.65h1.7v1.7h-1.7zM456.65 142.65h1.7v1.7h-1.7zM468.65 142.65h1.7v1.7h-1.7zM480.65 142.65h1.7v1.7h-1.7zM492.65 142.65h1.7v1.7h-1.7zM504.65 142.65h1.7v1.7h-1.7zM516.65 142.65h1.7v1.7h-1.7zM528.65 142.65h1.7v1.7h-1.7zM540.65 142.65h1.7v1.7h-1.7zM552.65 142.65h1.7v1.7h-1.7zM564.65 142.65h1.7v1.7h-1.7zM576.65 142.65h1.7v1.7h-1.7zM588.65 142.65h1.7v1.7h-1.7zM600.65 142.65h1.7v1.7h-1.7zM612.65 142.65h1.7v1.7h-1.7zM624.65 142.65h1.7v1.7h-1.7zM636.65 142.65h1.7v1.7h-1.7zM648.65 142.65h1.7v1.7h-1.7zM660.65 142.65h1.7v1.7h-1.7zM672.65 142.65h1.7v1.7h-1.7zM684.65 142.65h1.7v1.7h-1.7zM696.65 142.65h1.7v1.7h-1.7zM708.65 142.65h1.7v1.7h-1.7zM720.65 142.65h1.7v1.7h-1.7zM732.65 142.65h1.7v1.7h-1.7zM744.65 142.65h1.7v1.7h-1.7zM756.65 142.65h1.7v1.7h-1.7zM768.65 142.65h1.7v1.7h-1.7zM780.65 142.65h1.7v1.7h-1.7zM792.65 142.65h1.7v1.7h-1.7zM804.65 142.65h1.7v1.7h-1.7zM816.65 142.65h1.7v1.7h-1.7zM828.65 142.65h1.7v1.7h-1.7zM840.65 142.65h1.7v1.7h-1.7zM852.65 142.65h1.7v1.7h-1.7zM864.65 142.65h1.7v1.7h-1.7zM876.65 142.65h1.7v1.7h-1.7zM888.65 142.65h1.7v1.7h-1.7zM900.65 142.65h1.7v1.7h-1.7zM912.65 142.65h1.7v1.7h-1.7zM924.65 142.65h1.7v1.7h-1.7zM36.65 202.65h1.7v1.7h-1.7zM48.65 202.65h1.7v1.7h-1.7zM60.65 202.65h1.7v1.7h-1.7zM72.65 202.65h1.7v1.7h-1.7zM84.65 202.65h1.7v1.7h-1.7zM96.65 202.65h1.7v1.7h-1.7zM108.65 202.65h1.7v1.7h-1.7zM120.65 202.65h1.7v1.7h-1.7zM132.65 202.65h1.7v1.7h-1.7zM144.65 202.65h1.7v1.7h-1.7zM156.65 202.65h1.7v1.7h-1.7zM168.65 202.65h1.7v1.7h-1.7zM180.65 202.65h1.7v1.7h-1.7zM192.65 202.65h1.7v1.7h-1.7zM204.65 202.65h1.7v1.7h-1.7zM216.65 202.65h1.7v1.7h-1.7zM228.65 202.65h1.7v1.7h-1.7zM240.65 202.65h1.7v1.7h-1.7zM252.65 202.65h1.7v1.7h-1.7zM264.65 202.65h1.7v1.7h-1.7zM276.65 202.65h1.7v1.7h-1.7zM288.65 202.65h1.7v1.7h-1.7zM300.65 202.65h1.7v1.7h-1.7zM312.65 202.65h1.7v1.7h-1.7zM324.65 202.65h1.7v1.7h-1.7zM336.65 202.65h1.7v1.7h-1.7zM348.65 202.65h1.7v1.7h-1.7zM360.65 202.65h1.7v1.7h-1.7zM372.65 202.65h1.7v1.7h-1.7zM384.65 202.65h1.7v1.7h-1.7zM396.65 202.65h1.7v1.7h-1.7zM408.65 202.65h1.7v1.7h-1.7zM420.65 202.65h1.7v1.7h-1.7zM432.65 202.65h1.7v1.7h-1.7zM444.65 202.65h1.7v1.7h-1.7zM456.65 202.65h1.7v1.7h-1.7zM468.65 202.65h1.7v1.7h-1.7zM480.65 202.65h1.7v1.7h-1.7zM492.65 202.65h1.7v1.7h-1.7zM504.65 202.65h1.7v1.7h-1.7zM516.65 202.65h1.7v1.7h-1.7zM528.65 202.65h1.7v1.7h-1.7zM540.65 202.65h1.7v1.7h-1.7zM552.65 202.65h1.7v1.7h-1.7zM564.65 202.65h1.7v1.7h-1.7zM576.65 202.65h1.7v1.7h-1.7zM588.65 202.65h1.7v1.7h-1.7zM600.65 202.65h1.7v1.7h-1.7zM612.65 202.65h1.7v1.7h-1.7zM624.65 202.65h1.7v1.7h-1.7zM636.65 202.65h1.7v1.7h-1.7zM648.65 202.65h1.7v1.7h-1.7zM660.65 202.65h1.7v1.7h-1.7zM672.65 202.65h1.7v1.7h-1.7zM684.65 202.65h1.7v1.7h-1.7zM696.65 202.65h1.7v1.7h-1.7zM708.65 202.65h1.7v1.7h-1.7zM720.65 202.65h1.7v1.7h-1.7zM732.65 202.65h1.7v1.7h-1.7zM744.65 202.65h1.7v1.7h-1.7zM756.65 202.65h1.7v1.7h-1.7zM768.65 202.65h1.7v1.7h-1.7zM780.65 202.65h1.7v1.7h-1.7zM792.65 202.65h1.7v1.7h-1.7zM804.65 202.65h1.7v1.7h-1.7zM816.65 202.65h1.7v1.7h-1.7zM828.65 202.65h1.7v1.7h-1.7zM840.65 202.65h1.7v1.7h-1.7zM852.65 202.65h1.7v1.7h-1.7zM864.65 202.65h1.7v1.7h-1.7zM876.65 202.65h1.7v1.7h-1.7zM888.65 202.65h1.7v1.7h-1.7zM900.65 202.65h1.7v1.7h-1.7zM912.65 202.65h1.7v1.7h-1.7zM924.65 202.65h1.7v1.7h-1.7zM36.65 262.65h1.7v1.7h-1.7zM48.65 262.65h1.7v1.7h-1.7zM60.65 262.65h1.7v1.7h-1.7zM72.65 262.65h1.7v1.7h-1.7zM84.65 262.65h1.7v1.7h-1.7zM96.65 262.65h1.7v1.7h-1.7zM108.65 262.65h1.7v1.7h-1.7zM120.65 262.65h1.7v1.7h-1.7zM132.65 262.65h1.7v1.7h-1.7zM144.65 262.65h1.7v1.7h-1.7zM156.65 262.65h1.7v1.7h-1.7zM168.65 262.65h1.7v1.7h-1.7zM180.65 262.65h1.7v1.7h-1.7zM192.65 262.65h1.7v1.7h-1.7zM204.65 262.65h1.7v1.7h-1.7zM216.65 262.65h1.7v1.7h-1.7zM228.65 262.65h1.7v1.7h-1.7zM240.65 262.65h1.7v1.7h-1.7zM252.65 262.65h1.7v1.7h-1.7zM264.65 262.65h1.7v1.7h-1.7zM276.65 262.65h1.7v1.7h-1.7zM288.65 262.65h1.7v1.7h-1.7zM300.65 262.65h1.7v1.7h-1.7zM312.65 262.65h1.7v1.7h-1.7zM324.65 262.65h1.7v1.7h-1.7zM336.65 262.65h1.7v1.7h-1.7zM348.65 262.65h1.7v1.7h-1.7zM360.65 262.65h1.7v1.7h-1.7zM372.65 262.65h1.7v1.7h-1.7zM384.65 262.65h1.7v1.7h-1.7zM396.65 262.65h1.7v1.7h-1.7zM408.65 262.65h1.7v1.7h-1.7zM420.65 262.65h1.7v1.7h-1.7zM432.65 262.65h1.7v1.7h-1.7zM444.65 262.65h1.7v1.7h-1.7zM456.65 262.65h1.7v1.7h-1.7zM468.65 262.65h1.7v1.7h-1.7zM480.65 262.65h1.7v1.7h-1.7zM492.65 262.65h1.7v1.7h-1.7zM504.65 262.65h1.7v1.7h-1.7zM516.65 262.65h1.7v1.7h-1.7zM528.65 262.65h1.7v1.7h-1.7zM540.65 262.65h1.7v1.7h-1.7zM552.65 262.65h1.7v1.7h-1.7zM564.65 262.65h1.7v1.7h-1.7zM576.65 262.65h1.7v1.7h-1.7zM588.65 262.65h1.7v1.7h-1.7zM600.65 262.65h1.7v1.7h-1.7zM612.65 262.65h1.7v1.7h-1.7zM624.65 262.65h1.7v1.7h-1.7zM636.65 262.65h1.7v1.7h-1.7zM648.65 262.65h1.7v1.7h-1.7zM660.65 262.65h1.7v1.7h-1.7zM672.65 262.65h1.7v1.7h-1.7zM684.65 262.65h1.7v1.7h-1.7zM696.65 262.65h1.7v1.7h-1.7zM708.65 262.65h1.7v1.7h-1.7zM720.65 262.65h1.7v1.7h-1.7zM732.65 262.65h1.7v1.7h-1.7zM744.65 262.65h1.7v1.7h-1.7zM756.65 262.65h1.7v1.7h-1.7zM768.65 262.65h1.7v1.7h-1.7zM780.65 262.65h1.7v1.7h-1.7zM792.65 262.65h1.7v1.7h-1.7zM804.65 262.65h1.7v1.7h-1.7zM816.65 262.65h1.7v1.7h-1.7zM828.65 262.65h1.7v1.7h-1.7zM840.65 262.65h1.7v1.7h-1.7zM852.65 262.65h1.7v1.7h-1.7zM864.65 262.65h1.7v1.7h-1.7zM876.65 262.65h1.7v1.7h-1.7zM888.65 262.65h1.7v1.7h-1.7zM900.65 262.65h1.7v1.7h-1.7zM912.65 262.65h1.7v1.7h-1.7zM924.65 262.65h1.7v1.7h-1.7zM36.65 382.65h1.7v1.7h-1.7zM48.65 382.65h1.7v1.7h-1.7zM60.65 382.65h1.7v1.7h-1.7zM72.65 382.65h1.7v1.7h-1.7zM84.65 382.65h1.7v1.7h-1.7zM96.65 382.65h1.7v1.7h-1.7zM108.65 382.65h1.7v1.7h-1.7zM120.65 382.65h1.7v1.7h-1.7zM132.65 382.65h1.7v1.7h-1.7zM144.65 382.65h1.7v1.7h-1.7zM156.65 382.65h1.7v1.7h-1.7zM168.65 382.65h1.7v1.7h-1.7zM180.65 382.65h1.7v1.7h-1.7zM192.65 382.65h1.7v1.7h-1.7zM204.65 382.65h1.7v1.7h-1.7zM216.65 382.65h1.7v1.7h-1.7zM228.65 382.65h1.7v1.7h-1.7zM240.65 382.65h1.7v1.7h-1.7zM252.65 382.65h1.7v1.7h-1.7zM264.65 382.65h1.7v1.7h-1.7zM276.65 382.65h1.7v1.7h-1.7zM288.65 382.65h1.7v1.7h-1.7zM300.65 382.65h1.7v1.7h-1.7zM312.65 382.65h1.7v1.7h-1.7zM324.65 382.65h1.7v1.7h-1.7zM336.65 382.65h1.7v1.7h-1.7zM348.65 382.65h1.7v1.7h-1.7zM360.65 382.65h1.7v1.7h-1.7zM372.65 382.65h1.7v1.7h-1.7zM384.65 382.65h1.7v1.7h-1.7zM396.65 382.65h1.7v1.7h-1.7zM408.65 382.65h1.7v1.7h-1.7zM420.65 382.65h1.7v1.7h-1.7zM432.65 382.65h1.7v1.7h-1.7zM444.65 382.65h1.7v1.7h-1.7zM456.65 382.65h1.7v1.7h-1.7zM468.65 382.65h1.7v1.7h-1.7zM480.65 382.65h1.7v1.7h-1.7zM492.65 382.65h1.7v1.7h-1.7zM504.65 382.65h1.7v1.7h-1.7zM516.65 382.65h1.7v1.7h-1.7zM528.65 382.65h1.7v1.7h-1.7zM540.65 382.65h1.7v1.7h-1.7zM552.65 382.65h1.7v1.7h-1.7zM564.65 382.65h1.7v1.7h-1.7zM576.65 382.65h1.7v1.7h-1.7zM588.65 382.65h1.7v1.7h-1.7zM600.65 382.65h1.7v1.7h-1.7zM612.65 382.65h1.7v1.7h-1.7zM624.65 382.65h1.7v1.7h-1.7zM636.65 382.65h1.7v1.7h-1.7zM648.65 382.65h1.7v1.7h-1.7zM660.65 382.65h1.7v1.7h-1.7zM672.65 382.65h1.7v1.7h-1.7zM684.65 382.65h1.7v1.7h-1.7zM696.65 382.65h1.7v1.7h-1.7zM708.65 382.65h1.7v1.7h-1.7zM720.65 382.65h1.7v1.7h-1.7zM732.65 382.65h1.7v1.7h-1.7zM744.65 382.65h1.7v1.7h-1.7zM756.65 382.65h1.7v1.7h-1.7zM768.65 382.65h1.7v1.7h-1.7zM780.65 382.65h1.7v1.7h-1.7zM792.65 382.65h1.7v1.7h-1.7zM804.65 382.65h1.7v1.7h-1.7zM816.65 382.65h1.7v1.7h-1.7zM828.65 382.65h1.7v1.7h-1.7zM840.65 382.65h1.7v1.7h-1.7zM852.65 382.65h1.7v1.7h-1.7zM864.65 382.65h1.7v1.7h-1.7zM876.65 382.65h1.7v1.7h-1.7zM888.65 382.65h1.7v1.7h-1.7zM900.65 382.65h1.7v1.7h-1.7zM912.65 382.65h1.7v1.7h-1.7zM924.65 382.65h1.7v1.7h-1.7zM36.65 442.65h1.7v1.7h-1.7zM48.65 442.65h1.7v1.7h-1.7zM60.65 442.65h1.7v1.7h-1.7zM72.65 442.65h1.7v1.7h-1.7zM84.65 442.65h1.7v1.7h-1.7zM96.65 442.65h1.7v1.7h-1.7zM108.65 442.65h1.7v1.7h-1.7zM120.65 442.65h1.7v1.7h-1.7zM132.65 442.65h1.7v1.7h-1.7zM144.65 442.65h1.7v1.7h-1.7zM156.65 442.65h1.7v1.7h-1.7zM168.65 442.65h1.7v1.7h-1.7zM180.65 442.65h1.7v1.7h-1.7zM192.65 442.65h1.7v1.7h-1.7zM204.65 442.65h1.7v1.7h-1.7zM216.65 442.65h1.7v1.7h-1.7zM228.65 442.65h1.7v1.7h-1.7zM240.65 442.65h1.7v1.7h-1.7zM252.65 442.65h1.7v1.7h-1.7zM264.65 442.65h1.7v1.7h-1.7zM276.65 442.65h1.7v1.7h-1.7zM288.65 442.65h1.7v1.7h-1.7zM300.65 442.65h1.7v1.7h-1.7zM312.65 442.65h1.7v1.7h-1.7zM324.65 442.65h1.7v1.7h-1.7zM336.65 442.65h1.7v1.7h-1.7zM348.65 442.65h1.7v1.7h-1.7zM360.65 442.65h1.7v1.7h-1.7zM372.65 442.65h1.7v1.7h-1.7zM384.65 442.65h1.7v1.7h-1.7zM396.65 442.65h1.7v1.7h-1.7zM408.65 442.65h1.7v1.7h-1.7zM420.65 442.65h1.7v1.7h-1.7zM432.65 442.65h1.7v1.7h-1.7zM444.65 442.65h1.7v1.7h-1.7zM456.65 442.65h1.7v1.7h-1.7zM468.65 442.65h1.7v1.7h-1.7zM480.65 442.65h1.7v1.7h-1.7zM492.65 442.65h1.7v1.7h-1.7zM504.65 442.65h1.7v1.7h-1.7zM516.65 442.65h1.7v1.7h-1.7zM528.65 442.65h1.7v1.7h-1.7zM540.65 442.65h1.7v1.7h-1.7zM552.65 442.65h1.7v1.7h-1.7zM564.65 442.65h1.7v1.7h-1.7zM576.65 442.65h1.7v1.7h-1.7zM588.65 442.65h1.7v1.7h-1.7zM600.65 442.65h1.7v1.7h-1.7zM612.65 442.65h1.7v1.7h-1.7zM624.65 442.65h1.7v1.7h-1.7zM636.65 442.65h1.7v1.7h-1.7zM648.65 442.65h1.7v1.7h-1.7zM660.65 442.65h1.7v1.7h-1.7zM672.65 442.65h1.7v1.7h-1.7zM684.65 442.65h1.7v1.7h-1.7zM696.65 442.65h1.7v1.7h-1.7zM708.65 442.65h1.7v1.7h-1.7zM720.65 442.65h1.7v1.7h-1.7zM732.65 442.65h1.7v1.7h-1.7zM744.65 442.65h1.7v1.7h-1.7zM756.65 442.65h1.7v1.7h-1.7zM768.65 442.65h1.7v1.7h-1.7zM780.65 442.65h1.7v1.7h-1.7zM792.65 442.65h1.7v1.7h-1.7zM804.65 442.65h1.7v1.7h-1.7zM816.65 442.65h1.7v1.7h-1.7zM828.65 442.65h1.7v1.7h-1.7zM840.65 442.65h1.7v1.7h-1.7zM852.65 442.65h1.7v1.7h-1.7zM864.65 442.65h1.7v1.7h-1.7zM876.65 442.65h1.7v1.7h-1.7zM888.65 442.65h1.7v1.7h-1.7zM900.65 442.65h1.7v1.7h-1.7zM912.65 442.65h1.7v1.7h-1.7zM924.65 442.65h1.7v1.7h-1.7zM36.65 502.65h1.7v1.7h-1.7zM48.65 502.65h1.7v1.7h-1.7zM60.65 502.65h1.7v1.7h-1.7zM72.65 502.65h1.7v1.7h-1.7zM84.65 502.65h1.7v1.7h-1.7zM96.65 502.65h1.7v1.7h-1.7zM108.65 502.65h1.7v1.7h-1.7zM120.65 502.65h1.7v1.7h-1.7zM132.65 502.65h1.7v1.7h-1.7zM144.65 502.65h1.7v1.7h-1.7zM156.65 502.65h1.7v1.7h-1.7zM168.65 502.65h1.7v1.7h-1.7zM180.65 502.65h1.7v1.7h-1.7zM192.65 502.65h1.7v1.7h-1.7zM204.65 502.65h1.7v1.7h-1.7zM216.65 502.65h1.7v1.7h-1.7zM228.65 502.65h1.7v1.7h-1.7zM240.65 502.65h1.7v1.7h-1.7zM252.65 502.65h1.7v1.7h-1.7zM264.65 502.65h1.7v1.7h-1.7zM276.65 502.65h1.7v1.7h-1.7zM288.65 502.65h1.7v1.7h-1.7zM300.65 502.65h1.7v1.7h-1.7zM312.65 502.65h1.7v1.7h-1.7zM324.65 502.65h1.7v1.7h-1.7zM336.65 502.65h1.7v1.7h-1.7zM348.65 502.65h1.7v1.7h-1.7zM360.65 502.65h1.7v1.7h-1.7zM372.65 502.65h1.7v1.7h-1.7zM384.65 502.65h1.7v1.7h-1.7zM396.65 502.65h1.7v1.7h-1.7zM408.65 502.65h1.7v1.7h-1.7zM420.65 502.65h1.7v1.7h-1.7zM432.65 502.65h1.7v1.7h-1.7zM444.65 502.65h1.7v1.7h-1.7zM456.65 502.65h1.7v1.7h-1.7zM468.65 502.65h1.7v1.7h-1.7zM480.65 502.65h1.7v1.7h-1.7zM492.65 502.65h1.7v1.7h-1.7zM504.65 502.65h1.7v1.7h-1.7zM516.65 502.65h1.7v1.7h-1.7zM528.65 502.65h1.7v1.7h-1.7zM540.65 502.65h1.7v1.7h-1.7zM552.65 502.65h1.7v1.7h-1.7zM564.65 502.65h1.7v1.7h-1.7zM576.65 502.65h1.7v1.7h-1.7zM588.65 502.65h1.7v1.7h-1.7zM600.65 502.65h1.7v1.7h-1.7zM612.65 502.65h1.7v1.7h-1.7zM624.65 502.65h1.7v1.7h-1.7zM636.65 502.65h1.7v1.7h-1.7zM648.65 502.65h1.7v1.7h-1.7zM660.65 502.65h1.7v1.7h-1.7zM672.65 502.65h1.7v1.7h-1.7zM684.65 502.65h1.7v1.7h-1.7zM696.65 502.65h1.7v1.7h-1.7zM708.65 502.65h1.7v1.7h-1.7zM720.65 502.65h1.7v1.7h-1.7zM732.65 502.65h1.7v1.7h-1.7zM744.65 502.65h1.7v1.7h-1.7zM756.65 502.65h1.7v1.7h-1.7zM768.65 502.65h1.7v1.7h-1.7zM780.65 502.65h1.7v1.7h-1.7zM792.65 502.65h1.7v1.7h-1.7zM804.65 502.65h1.7v1.7h-1.7zM816.65 502.65h1.7v1.7h-1.7zM828.65 502.65h1.7v1.7h-1.7zM840.65 502.65h1.7v1.7h-1.7zM852.65 502.65h1.7v1.7h-1.7zM864.65 502.65h1.7v1.7h-1.7zM876.65 502.65h1.7v1.7h-1.7zM888.65 502.65h1.7v1.7h-1.7zM900.65 502.65h1.7v1.7h-1.7zM912.65 502.65h1.7v1.7h-1.7zM924.65 502.65h1.7v1.7h-1.7zM36.65 562.65h1.7v1.7h-1.7zM48.65 562.65h1.7v1.7h-1.7zM60.65 562.65h1.7v1.7h-1.7zM72.65 562.65h1.7v1.7h-1.7zM84.65 562.65h1.7v1.7h-1.7zM96.65 562.65h1.7v1.7h-1.7zM108.65 562.65h1.7v1.7h-1.7zM120.65 562.65h1.7v1.7h-1.7zM132.65 562.65h1.7v1.7h-1.7zM144.65 562.65h1.7v1.7h-1.7zM156.65 562.65h1.7v1.7h-1.7zM168.65 562.65h1.7v1.7h-1.7zM180.65 562.65h1.7v1.7h-1.7zM192.65 562.65h1.7v1.7h-1.7zM204.65 562.65h1.7v1.7h-1.7zM216.65 562.65h1.7v1.7h-1.7zM228.65 562.65h1.7v1.7h-1.7zM240.65 562.65h1.7v1.7h-1.7zM252.65 562.65h1.7v1.7h-1.7zM264.65 562.65h1.7v1.7h-1.7zM276.65 562.65h1.7v1.7h-1.7zM288.65 562.65h1.7v1.7h-1.7zM300.65 562.65h1.7v1.7h-1.7zM312.65 562.65h1.7v1.7h-1.7zM324.65 562.65h1.7v1.7h-1.7zM336.65 562.65h1.7v1.7h-1.7zM348.65 562.65h1.7v1.7h-1.7zM360.65 562.65h1.7v1.7h-1.7zM372.65 562.65h1.7v1.7h-1.7zM384.65 562.65h1.7v1.7h-1.7zM396.65 562.65h1.7v1.7h-1.7zM408.65 562.65h1.7v1.7h-1.7zM420.65 562.65h1.7v1.7h-1.7zM432.65 562.65h1.7v1.7h-1.7zM444.65 562.65h1.7v1.7h-1.7zM456.65 562.65h1.7v1.7h-1.7zM468.65 562.65h1.7v1.7h-1.7zM480.65 562.65h1.7v1.7h-1.7zM492.65 562.65h1.7v1.7h-1.7zM504.65 562.65h1.7v1.7h-1.7zM516.65 562.65h1.7v1.7h-1.7zM528.65 562.65h1.7v1.7h-1.7zM540.65 562.65h1.7v1.7h-1.7zM552.65 562.65h1.7v1.7h-1.7zM564.65 562.65h1.7v1.7h-1.7zM576.65 562.65h1.7v1.7h-1.7zM588.65 562.65h1.7v1.7h-1.7zM600.65 562.65h1.7v1.7h-1.7zM612.65 562.65h1.7v1.7h-1.7zM624.65 562.65h1.7v1.7h-1.7zM636.65 562.65h1.7v1.7h-1.7zM648.65 562.65h1.7v1.7h-1.7zM660.65 562.65h1.7v1.7h-1.7zM672.65 562.65h1.7v1.7h-1.7zM684.65 562.65h1.7v1.7h-1.7zM696.65 562.65h1.7v1.7h-1.7zM708.65 562.65h1.7v1.7h-1.7zM720.65 562.65h1.7v1.7h-1.7zM732.65 562.65h1.7v1.7h-1.7zM744.65 562.65h1.7v1.7h-1.7zM756.65 562.65h1.7v1.7h-1.7zM768.65 562.65h1.7v1.7h-1.7zM780.65 562.65h1.7v1.7h-1.7zM792.65 562.65h1.7v1.7h-1.7zM804.65 562.65h1.7v1.7h-1.7zM816.65 562.65h1.7v1.7h-1.7zM828.65 562.65h1.7v1.7h-1.7zM840.65 562.65h1.7v1.7h-1.7zM852.65 562.65h1.7v1.7h-1.7zM864.65 562.65h1.7v1.7h-1.7zM876.65 562.65h1.7v1.7h-1.7zM888.65 562.65h1.7v1.7h-1.7zM900.65 562.65h1.7v1.7h-1.7zM912.65 562.65h1.7v1.7h-1.7zM924.65 562.65h1.7v1.7h-1.7z" fill="#8c8c8c"/>
<path d="M480 35h4v1h-4zM480 47h4v1h-4zM480 59h4v1h-4zM480 71h4v1h-4zM480 83h4v1h-4zM480 95h4v1h-4zM480 107h4v1h-4zM480 119h4v1h-4zM480 131h4v1h-4zM480 143h4v1h-4zM480 155h4v1h-4zM480 167h4v1h-4zM480 179h4v1h-4zM480 191h4v1h-4zM480 203h4v1h-4zM480 215h4v1h-4zM480 227h4v1h-4zM480 239h4v1h-4zM480 251h4v1h-4zM480 263h4v1h-4zM480 275h4v1h-4zM480 287h4v1h-4zM480 299h4v1h-4zM480 311h4v1h-4zM480 323h4v1h-4zM480 335h4v1h-4zM480 347h4v1h-4zM480 359h4v1h-4zM480 371h4v1h-4zM480 383h4v1h-4zM480 395h4v1h-4zM480 407h4v1h-4zM480 419h4v1h-4zM480 431h4v1h-4zM480 443h4v1h-4zM480 455h4v1h-4zM480 467h4v1h-4zM480 479h4v1h-4zM480 491h4v1h-4zM480 503h4v1h-4zM480 515h4v1h-4zM480 527h4v1h-4zM480 539h4v1h-4zM480 551h4v1h-4zM480 563h4v1h-4zM480 575h4v1h-4zM480 587h4v1h-4zM480 599h4v1h-4zM480 611h4v1h-4zM37 321.5h1v4h-1zM49 321.5h1v4h-1zM61 321.5h1v4h-1zM73 321.5h1v4h-1zM85 321.5h1v4h-1zM97 321.5h1v4h-1zM109 321.5h1v4h-1zM121 321.5h1v4h-1zM133 321.5h1v4h-1zM145 321.5h1v4h-1zM157 321.5h1v4h-1zM169 321.5h1v4h-1zM181 321.5h1v4h-1zM193 321.5h1v4h-1zM205 321.5h1v4h-1zM217 321.5h1v4h-1zM229 321.5h1v4h-1zM241 321.5h1v4h-1zM253 321.5h1v4h-1zM265 321.5h1v4h-1zM277 321.5h1v4h-1zM289 321.5h1v4h-1zM301 321.5h1v4h-1zM313 321.5h1v4h-1zM325 321.5h1v4h-1zM337 321.5h1v4h-1zM349 321.5h1v4h-1zM361 321.5h1v4h-1zM373 321.5h1v4h-1zM385 321.5h1v4h-1zM397 321.5h1v4h-1zM409 321.5h1v4h-1zM421 321.5h1v4h-1zM433 321.5h1v4h-1zM445 321.5h1v4h-1zM457 321.5h1v4h-1zM469 321.5h1v4h-1zM481 321.5h1v4h-1zM493 321.5h1v4h-1zM505 321.5h1v4h-1zM517 321.5h1v4h-1zM529 321.5h1v4h-1zM541 321.5h1v4h-1zM553 321.5h1v4h-1zM565 321.5h1v4h-1zM577 321.5h1v4h-1zM589 321.5h1v4h-1zM601 321.5h1v4h-1zM613 321.5h1v4h-1zM625 321.5h1v4h-1zM637 321.5h1v4h-1zM649 321.5h1v4h-1zM661 321.5h1v4h-1zM673 321.5h1v4h-1zM685 321.5h1v4h-1zM697 321.5h1v4h-1zM709 321.5h1v4h-1zM721 321.5h1v4h-1zM733 321.5h1v4h-1zM745 321.5h1v4h-1zM757 321.5h1v4h-1zM769 321.5h1v4h-1zM781 321.5h1v4h-1zM793 321.5h1v4h-1zM805 321.5h1v4h-1zM817 321.5h1v4h-1zM829 321.5h1v4h-1zM841 321.5h1v4h-1zM853 321.5h1v4h-1zM865 321.5h1v4h-1zM877 321.5h1v4h-1zM889 321.5h1v4h-1zM901 321.5h1v4h-1zM913 321.5h1v4h-1zM925 321.5h1v4h-1zM37 25h1v3h-1zM37 618h1v3h-1zM49 25h1v3h-1zM49 618h1v3h-1zM61 25h1v6h-1zM61 615h1v6h-1zM73 25h1v3h-1zM73 618h1v3h-1zM85 25h1v3h-1zM85 618h1v3h-1zM97 25h1v3h-1zM97 618h1v3h-1zM109 25h1v3h-1zM109 618h1v3h-1zM121 25h1v6h-1zM121 615h1v6h-1zM133 25h1v3h-1zM133 618h1v3h-1zM145 25h1v3h-1zM145 618h1v3h-1zM157 25h1v3h-1zM157 618h1v3h-1zM169 25h1v3h-1zM169 618h1v3h-1zM181 25h1v6h-1zM181 615h1v6h-1zM193 25h1v3h-1zM193 618h1v3h-1zM205 25h1v3h-1zM205 618h1v3h-1zM217 25h1v3h-1zM217 618h1v3h-1zM229 25h1v3h-1zM229 618h1v3h-1zM241 25h1v6h-1zM241 615h1v6h-1zM253 25h1v3h-1zM253 618h1v3h-1zM265 25h1v3h-1zM265 618h1v3h-1zM277 25h1v3h-1zM277 618h1v3h-1zM289 25h1v3h-1zM289 618h1v3h-1zM301 25h1v6h-1zM301 615h1v6h-1zM313 25h1v3h-1zM313 618h1v3h-1zM325 25h1v3h-1zM325 618h1v3h-1zM337 25h1v3h-1zM337 618h1v3h-1zM349 25h1v3h-1zM349 618h1v3h-1zM361 25h1v6h-1zM361 615h1v6h-1zM373 25h1v3h-1zM373 618h1v3h-1zM385 25h1v3h-1zM385 618h1v3h-1zM397 25h1v3h-1zM397 618h1v3h-1zM409 25h1v3h-1zM409 618h1v3h-1zM421 25h1v6h-1zM421 615h1v6h-1zM433 25h1v3h-1zM433 618h1v3h-1zM445 25h1v3h-1zM445 618h1v3h-1zM457 25h1v3h-1zM457 618h1v3h-1zM469 25h1v3h-1zM469 618h1v3h-1zM481 25h1v6h-1zM481 615h1v6h-1zM493 25h1v3h-1zM493 618h1v3h-1zM505 25h1v3h-1zM505 618h1v3h-1zM517 25h1v3h-1zM517 618h1v3h-1zM529 25h1v3h-1zM529 618h1v3h-1zM541 25h1v6h-1zM541 615h1v6h-1zM553 25h1v3h-1zM553 618h1v3h-1zM565 25h1v3h-1zM565 618h1v3h-1zM577 25h1v3h-1zM577 618h1v3h-1zM589 25h1v3h-1zM589 618h1v3h-1zM601 25h1v6h-1zM601 615h1v6h-1zM613 25h1v3h-1zM613 618h1v3h-1zM625 25h1v3h-1zM625 618h1v3h-1zM637 25h1v3h-1zM637 618h1v3h-1zM649 25h1v3h-1zM649 618h1v3h-1zM661 25h1v6h-1zM661 615h1v6h-1zM673 25h1v3h-1zM673 618h1v3h-1zM685 25h1v3h-1zM685 618h1v3h-1zM697 25h1v3h-1zM697 618h1v3h-1zM709 25h1v3h-1zM709 618h1v3h-1zM721 25h1v6h-1zM721 615h1v6h-1zM733 25h1v3h-1zM733 618h1v3h-1zM745 25h1v3h-1zM745 618h1v3h-1zM757 25h1v3h-1zM757 618h1v3h-1zM769 25h1v3h-1zM769 618h1v3h-1zM781 25h1v6h-1zM781 615h1v6h-1zM793 25h1v3h-1zM793 618h1v3h-1zM805 25h1v3h-1zM805 618h1v3h-1zM817 25h1v3h-1zM817 618h1v3h-1zM829 25h1v3h-1zM829 618h1v3h-1zM841 25h1v6h-1zM841 615h1v6h-1zM853 25h1v3h-1zM853 618h1v3h-1zM865 25h1v3h-1zM865 618h1v3h-1zM877 25h1v3h-1zM877 618h1v3h-1zM889 25h1v3h-1zM889 618h1v3h-1zM901 25h1v6h-1zM901 615h1v6h-1zM913 25h1v3h-1zM913 618h1v3h-1zM925 25h1v3h-1zM925 618h1v3h-1zM26 35h3.5v1h-3.5zM930.5 35h3.5v1h-3.5zM26 47h3.5v1h-3.5zM930.5 47h3.5v1h-3.5zM26 59h3.5v1h-3.5zM930.5 59h3.5v1h-3.5zM26 71h3.5v1h-3.5zM930.5 71h3.5v1h-3.5zM26 83h6v1h-6zM928 83h6v1h-6zM26 95h3.5v1h-3.5zM930.5 95h3.5v1h-3.5zM26 107h3.5v1h-3.5zM930.5 107h3.5v1h-3.5zM26 119h3.5v1h-3.5zM930.5 119h3.5v1h-3.5zM26 131h3.5v1h-3.5zM930.5 131h3.5v1h-3.5zM26 143h6v1h-6zM928 143h6v1h-6zM26 155h3.5v1h-3.5zM930.5 155h3.5v1h-3.5zM26 167h3.5v1h-3.5zM930.5 167h3.5v1h-3.5zM26 179h3.5v1h-3.5zM930.5 179h3.5v1h-3.5zM26 191h3.5v1h-3.5zM930.5 191h3.5v1h-3.5zM26 203h6v1h-6zM928 203h6v1h-6zM26 215h3.5v1h-3.5zM930.5 215h3.5v1h-3.5zM26 227h3.5v1h-3.5zM930.5 227h3.5v1h-3.5zM26 239h3.5v1h-3.5zM930.5 239h3.5v1h-3.5zM26 251h3.5v1h-3.5zM930.5 251h3.5v1h-3.5zM26 263h6v1h-6zM928 263h6v1h-6zM26 275h3.5v1h-3.5zM930.5 275h3.5v1h-3.5zM26 287h3.5v1h-3.5zM930.5 287h3.5v1h-3.5zM26 299h3.5v1h-3.5zM930.5 299h3.5v1h-3.5zM26 311h3.5v1h-3.5zM930.5 311h3.5v1h-3.5zM26 323h6v1h-6zM928 323h6v1h-6zM26 335h3.5v1h-3.5zM930.5 335h3.5v1h-3.5zM26 347h3.5v1h-3.5zM930.5 347h3.5v1h-3.5zM26 359h3.5v1h-3.5zM930.5 359h3.5v1h-3.5zM26 371h3.5v1h-3.5zM930.5 371h3.5v1h-3.5zM26 383h6v1h-6zM928 383h6v1h-6zM26 395h3.5v1h-3.5zM930.5 395h3.5v1h-3.5zM26 407h3.5v1h-3.5zM930.5 407h3.5v1h-3.5zM26 419h3.5v1h-3.5zM930.5 419h3.5v1h-3.5zM26 431h3.5v1h-3.5zM930.5 431h3.5v1h-3.5zM26 443h6v1h-6zM928 443h6v1h-6zM26 455h3.5v1h-3.5zM930.5 455h3.5v1h-3.5zM26 467h3.5v1h-3.5zM930.5 467h3.5v1h-3.5zM26 479h3.5v1h-3.5zM930.5 479h3.5v1h-3.5zM26 491h3.5v1h-3.5zM930.5 491h3.5v1h-3.5zM26 503h6v1h-6zM928 503h6v1h-6zM26 515h3.5v1h-3.5zM930.5 515h3.5v1h-3.5zM26 527h3.5v1h-3.5zM930.5 527h3.5v1h-3.5zM26 539h3.5v1h-3.5zM930.5 539h3.5v1h-3.5zM26 551h3.5v1h-3.5zM930.5 551h3.5v1h-3.5zM26 563h6v1h-6zM928 563h6v1h-6zM26 575h3.5v1h-3.5zM930.5 575h3.5v1h-3.5zM26 587h3.5v1h-3.5zM930.5 587h3.5v1h-3.5zM26 599h3.5v1h-3.5zM930.5 599h3.5v1h-3.5zM26 611h3.5v1h-3.5zM930.5 611h3.5v1h-3.5z" fill="#e6e6e6"/>
<!-- trace -->
<rect x="363.6" y="154" width="1.4" height="142" fill="#e0d828"/>
<path d="M26 320.5h1v4.5h-1zM27 322.5h1v2.5h-1zM28 322.5h1v2.5h-1zM29 320.5h1v4.5h-1zM30 322.5h1v5.5h-1zM31 320.5h1v4.5h-1zM32 322.5h1v2.5h-1zM33 322.5h1v5h-1zM34 322.5h1v5.5h-1zM35 322.5h1v2.5h-1zM36 322.5h1v2.5h-1zM37 322.5h1v5h-1zM38 322.5h1v2.5h-1zM39 322.5h1v2.5h-1zM40 322.5h1v2.5h-1zM41 322.5h1v4.5h-1zM42 322.5h1v2.5h-1zM43 322.5h1v4.5h-1zM44 322.5h1v4.5h-1zM45 322.5h1v2.5h-1zM46 322.5h1v2.5h-1zM47 322.5h1v5.5h-1zM48 322.5h1v2.5h-1zM49 322.5h1v2.5h-1zM50 322.5h1v2.5h-1zM51 320.5h1v4.5h-1zM52 322.5h1v5.5h-1zM53 322.5h1v5.5h-1zM54 322.5h1v2.5h-1zM55 322.5h1v2.5h-1zM56 322.5h1v2.5h-1zM57 322.5h1v4.5h-1zM58 322.5h1v2.5h-1zM59 322.5h1v5.5h-1zM60 322.5h1v2.5h-1zM61 321h1v4h-1zM62 321.5h1v3.5h-1zM63 322.5h1v2.5h-1zM64 322.5h1v4.5h-1zM65 322.5h1v2.5h-1zM66 322.5h1v5h-1zM67 322.5h1v2.5h-1zM68 321.5h1v3.5h-1zM69 322.5h1v2.5h-1zM70 322.5h1v5.5h-1zM71 322.5h1v4.5h-1zM72 322.5h1v4.5h-1zM73 322.5h1v2.5h-1zM74 322.5h1v2.5h-1zM75 322.5h1v4.5h-1zM76 322.5h1v2.5h-1zM77 322.5h1v5h-1zM78 322.5h1v2.5h-1zM79 322.5h1v5.5h-1zM80 322.5h1v5.5h-1zM81 322.5h1v5.5h-1zM82 322.5h1v2.5h-1zM83 321h1v4h-1zM84 322.5h1v5h-1zM85 322.5h1v2.5h-1zM86 322.5h1v5.5h-1zM87 322.5h1v4.5h-1zM88 322.5h1v5h-1zM89 322.5h1v2.5h-1zM90 322.5h1v2.5h-1zM91 322.5h1v2.5h-1zM92 322.5h1v4.5h-1zM93 322.5h1v5h-1zM94 322.5h1v5.5h-1zM95 322.5h1v5h-1zM96 321.5h1v3.5h-1zM97 322.5h1v5.5h-1zM98 322.5h1v2.5h-1zM99 322.5h1v5h-1zM100 321h1v4h-1zM101 322.5h1v5.5h-1zM102 320.5h1v4.5h-1zM103 322.5h1v5h-1zM104 322.5h1v4.5h-1zM105 322.5h1v4.5h-1zM106 322.5h1v2.5h-1zM107 322.5h1v4.5h-1zM108 322.5h1v5.5h-1zM109 322.5h1v2.5h-1zM110 322.5h1v5h-1zM111 322.5h1v2.5h-1zM112 322.5h1v2.5h-1zM113 321.5h1v3.5h-1zM114 322.5h1v5.5h-1zM115 322.5h1v2.5h-1zM116 322.5h1v5.5h-1zM117 321h1v4h-1zM118 322.5h1v2.5h-1zM119 322.5h1v2.5h-1zM120 322.5h1v4.5h-1zM121 322.5h1v2.5h-1zM122 322.5h1v2.5h-1zM123 322.5h1v5h-1zM124 322.5h1v2.5h-1zM125 322.5h1v2.5h-1zM126 322.5h1v2.5h-1zM127 322.5h1v4.5h-1zM128 322.5h1v2.5h-1zM129 322.5h1v5h-1zM130 321.5h1v3.5h-1zM131 322.5h1v5h-1zM132 320.5h1v4.5h-1zM133 322.5h1v2.5h-1zM134 322.5h1v4.5h-1zM135 322.5h1v2.5h-1zM136 322.5h1v2.5h-1zM137 322.5h1v2.5h-1zM138 322.5h1v2.5h-1zM139 322.5h1v2.5h-1zM140 322.5h1v4.5h-1zM141 322.5h1v2.5h-1zM142 321h1v4h-1zM143 322.5h1v2.5h-1zM144 322.5h1v2.5h-1zM145 322.5h1v5.5h-1zM146 322.5h1v4.5h-1zM147 322.5h1v2.5h-1zM148 322.5h1v4.5h-1zM149 322.5h1v5.5h-1zM150 321.5h1v3.5h-1zM151 322.5h1v2.5h-1zM152 322.5h1v2.5h-1zM153 322.5h1v2.5h-1zM154 322.5h1v2.5h-1zM155 322.5h1v2.5h-1zM156 322.5h1v5.5h-1zM157 321.5h1v3.5h-1zM158 322.5h1v2.5h-1zM159 321.5h1v3.5h-1zM160 322.5h1v2.5h-1zM161 322.5h1v2.5h-1zM162 322.5h1v2.5h-1zM163 320.5h1v4.5h-1zM164 322.5h1v4.5h-1zM165 322.5h1v5.5h-1zM166 322.5h1v5h-1zM167 322.5h1v2.5h-1zM168 322.5h1v2.5h-1zM169 320.5h1v4.5h-1zM170 322.5h1v2.5h-1zM171 321h1v4h-1zM172 322.5h1v2.5h-1zM173 322.5h1v5.5h-1zM174 322.5h1v5.5h-1zM175 322.5h1v4.5h-1zM176 322.5h1v5.5h-1zM177 322.5h1v5.5h-1zM178 322.5h1v2.5h-1zM179 321.5h1v3.5h-1zM180 321.5h1v3.5h-1zM181 322.5h1v2.5h-1zM182 322.5h1v4.5h-1zM183 322.5h1v2.5h-1zM184 322.5h1v5h-1zM185 321.5h1v3.5h-1zM186 322.5h1v5.5h-1zM187 322.5h1v5.5h-1zM188 321.5h1v3.5h-1zM189 322.5h1v2.5h-1zM190 320.5h1v4.5h-1zM191 322.5h1v2.5h-1zM192 322.5h1v4.5h-1zM193 321.5h1v3.5h-1zM194 322.5h1v2.5h-1zM195 322.5h1v2.5h-1zM196 322.5h1v4.5h-1zM197 322.5h1v5h-1zM198 322.5h1v4.5h-1zM199 322.5h1v2.5h-1zM200 320.5h1v4.5h-1zM201 321h1v4h-1zM202 322.5h1v2.5h-1zM203 322.5h1v2.5h-1zM204 322.5h1v2.5h-1zM205 322.5h1v4.5h-1zM206 322.5h1v5.5h-1zM207 322.5h1v5.5h-1zM208 322.5h1v5h-1zM209 322.5h1v5.5h-1zM210 322.5h1v4.5h-1zM211 321.5h1v3.5h-1zM212 322.5h1v5h-1zM213 322.5h1v4.5h-1zM214 322.5h1v2.5h-1zM215 322.5h1v2.5h-1zM216 322.5h1v4.5h-1zM217 322.5h1v2.5h-1zM218 322.5h1v2.5h-1zM219 322.5h1v2.5h-1zM220 322.5h1v2.5h-1zM221 322.5h1v2.5h-1zM222 322.5h1v5h-1zM223 322.5h1v5.5h-1zM224 322.5h1v5h-1zM225 322.5h1v2.5h-1zM226 322.5h1v4.5h-1zM227 322.5h1v5h-1zM228 322.5h1v2.5h-1zM229 322.5h1v2.5h-1zM230 322.5h1v2.5h-1zM231 322.5h1v2.5h-1zM232 322.5h1v5.5h-1zM233 322.5h1v2.5h-1zM234 322.5h1v5.5h-1zM235 321h1v4h-1zM236 320.5h1v4.5h-1zM237 322.5h1v2.5h-1zM238 322.5h1v5.5h-1zM239 322.5h1v2.5h-1zM240 322.5h1v2.5h-1zM241 322.5h1v2.5h-1zM242 322.5h1v2.5h-1zM243 320.5h1v4.5h-1zM244 322.5h1v2.5h-1zM245 322.5h1v5.5h-1zM246 322.5h1v2.5h-1zM247 322.5h1v4.5h-1zM248 322.5h1v2.5h-1zM249 322.5h1v2.5h-1zM250 322.5h1v2.5h-1zM251 322.5h1v2.5h-1zM252 322.5h1v2.5h-1zM253 322.5h1v5.5h-1zM254 322.5h1v2.5h-1zM255 322.5h1v4.5h-1zM256 322.5h1v5h-1zM257 322.5h1v2.5h-1zM258 322.5h1v2.5h-1zM259 321.5h1v3.5h-1zM260 322.5h1v4.5h-1zM261 321.5h1v3.5h-1zM262 322.5h1v5h-1zM263 322.5h1v2.5h-1zM264 322.5h1v2.5h-1zM265 320.5h1v4.5h-1zM266 322.5h1v2.5h-1zM267 322.5h1v2.5h-1zM268 322.5h1v2.5h-1zM269 321h1v4h-1zM270 322.5h1v2.5h-1zM271 322.5h1v2.5h-1zM272 322.5h1v2.5h-1zM273 320.5h1v4.5h-1zM274 322.5h1v5.5h-1zM275 322.5h1v2.5h-1zM276 322.5h1v5.5h-1zM277 322.5h1v2.5h-1zM278 322.5h1v2.5h-1zM279 322.5h1v5h-1zM280 322.5h1v2.5h-1zM281 322.5h1v2.5h-1zM282 322.5h1v2.5h-1zM283 322.5h1v4.5h-1zM284 322.5h1v2.5h-1zM285 285.5h1v40.5h-1zM286 283h1v6.5h-1zM287 279h1v8h-1zM288 278h1v6.5h-1zM289 275.5h1v6.5h-1zM290 273h1v6.5h-1zM291 269.5h1v8h-1zM292 268.5h1v6.5h-1zM293 266h1v6.5h-1zM294 264h1v7.5h-1zM295 261.5h1v6.5h-1zM296 259.5h1v6.5h-1zM297 257.5h1v7.5h-1zM298 255h1v6.5h-1zM299 252h1v7.5h-1zM300 251h1v6.5h-1zM301 249h1v7.5h-1zM302 247h1v6h-1zM303 245h1v6h-1zM304 241.5h1v7.5h-1zM305 241h1v7.5h-1zM306 237.5h1v7.5h-1zM307 237h1v7.5h-1zM308 235h1v6h-1zM309 233h1v6h-1zM310 231.5h1v7h-1zM311 229.5h1v7h-1zM312 226.5h1v7h-1zM313 226h1v6h-1zM314 224h1v6h-1zM315 221.5h1v7h-1zM316 221h1v6h-1zM317 218h1v7h-1zM318 216.5h1v7h-1zM319 214.5h1v7h-1zM320 214h1v6h-1zM321 212.5h1v7h-1zM322 211h1v7h-1zM323 209.5h1v6h-1zM324 206.5h1v7h-1zM325 206.5h1v5.5h-1zM326 203.5h1v7h-1zM327 203.5h1v5.5h-1zM328 201h1v7h-1zM329 199.5h1v7h-1zM330 199h1v5.5h-1zM331 197.5h1v7h-1zM332 196.5h1v7h-1zM333 195h1v7h-1zM334 193.5h1v5.5h-1zM335 191h1v6.5h-1zM336 190h1v6.5h-1zM337 189.5h1v5.5h-1zM338 188.5h1v5.5h-1zM339 187h1v5.5h-1zM340 186h1v5.5h-1zM341 184.5h1v5.5h-1zM342 183.5h1v5.5h-1zM343 181h1v6.5h-1zM344 181h1v5.5h-1zM345 180h1v5.5h-1zM346 178.5h1v5.5h-1zM347 177.5h1v6.5h-1zM348 176.5h1v6.5h-1zM349 175.5h1v5.5h-1zM350 173h1v6.5h-1zM351 173h1v5.5h-1zM352 172h1v5.5h-1zM353 171h1v6.5h-1zM354 174h1v5.5h-1zM355 174h1v5h-1zM356 174h1v5h-1zM357 174h1v2.5h-1zM358 174h1v2.5h-1zM359 174h1v5.5h-1zM360 174.5h1v2.5h-1zM361 174.5h1v4.5h-1zM362 174.5h1v2.5h-1zM363 164.5h1v14.5h-1zM364 152.5h1v16.5h-1zM365 152.5h1v8h-1zM366 155h1v7h-1zM367 158h1v7h-1zM368 160.5h1v8h-1zM369 163h1v7h-1zM370 166h1v7h-1zM371 168.5h1v7h-1zM372 171h1v8h-1zM373 172.5h1v8h-1zM374 177.5h1v2.5h-1zM375 177.5h1v2.5h-1zM376 177.5h1v2.5h-1zM377 176.5h1v3.5h-1zM378 177.5h1v4.5h-1zM379 177.5h1v4.5h-1zM380 177.5h1v2.5h-1zM381 177.5h1v2.5h-1zM382 177.5h1v4.5h-1zM383 177.5h1v5.5h-1zM384 176.5h1v3.5h-1zM385 177.5h1v5h-1zM386 176h1v4h-1zM387 175.5h1v4.5h-1zM388 175.5h1v4.5h-1zM389 177.5h1v2.5h-1zM390 177.5h1v2.5h-1zM391 177.5h1v5h-1zM392 177.5h1v5h-1zM393 176.5h1v3.5h-1zM394 177.5h1v2.5h-1zM395 177.5h1v4.5h-1zM396 177.5h1v4.5h-1zM397 177.5h1v2.5h-1zM398 177.5h1v2.5h-1zM399 177.5h1v2.5h-1zM400 177.5h1v2.5h-1zM401 175.5h1v4.5h-1zM402 177.5h1v5.5h-1zM403 177.5h1v2.5h-1zM404 177.5h1v2.5h-1zM405 177.5h1v4.5h-1zM406 177.5h1v2.5h-1zM407 177.5h1v2.5h-1zM408 177.5h1v2.5h-1zM409 176h1v4h-1zM410 177.5h1v2.5h-1zM411 177.5h1v2.5h-1zM412 177.5h1v2.5h-1zM413 177.5h1v2.5h-1zM414 175.5h1v4.5h-1zM415 177.5h1v5h-1zM416 177.5h1v4.5h-1zM417 177.5h1v5h-1zM418 177.5h1v2.5h-1zM419 177.5h1v2.5h-1zM420 177.5h1v5h-1zM421 177.5h1v2.5h-1zM422 177.5h1v2.5h-1zM423 177.5h1v5.5h-1zM424 176.5h1v3.5h-1zM425 177.5h1v2.5h-1zM426 176h1v4h-1zM427 177.5h1v2.5h-1zM428 177.5h1v2.5h-1zM429 177.5h1v2.5h-1zM430 177.5h1v2.5h-1zM431 177.5h1v5.5h-1zM432 177.5h1v4.5h-1zM433 177.5h1v5h-1zM434 177.5h1v2.5h-1zM435 177.5h1v2.5h-1zM436 177.5h1v2.5h-1zM437 177.5h1v5h-1zM438 177.5h1v5h-1zM439 177.5h1v2.5h-1zM440 177.5h1v2.5h-1zM441 177.5h1v2.5h-1zM442 177.5h1v2.5h-1zM443 177.5h1v2.5h-1zM444 177.5h1v2.5h-1zM445 177.5h1v2.5h-1zM446 177.5h1v5.5h-1zM447 177.5h1v2.5h-1zM448 177.5h1v2.5h-1zM449 176.5h1v3.5h-1zM450 176.5h1v3.5h-1zM451 177.5h1v2.5h-1zM452 177.5h1v2.5h-1zM453 177.5h1v2.5h-1zM454 176h1v4h-1zM455 175.5h1v4.5h-1zM456 176h1v4h-1zM457 176h1v4h-1zM458 176h1v4h-1zM459 177.5h1v2.5h-1zM460 177.5h1v5.5h-1zM461 177.5h1v2.5h-1zM462 177.5h1v4.5h-1zM463 177.5h1v2.5h-1zM464 177.5h1v2.5h-1zM465 175.5h1v4.5h-1zM466 176h1v4h-1zM467 177.5h1v2.5h-1zM468 177.5h1v5.5h-1zM469 177.5h1v2.5h-1zM470 177.5h1v4.5h-1zM471 176h1v4h-1zM472 177.5h1v4.5h-1zM473 177.5h1v4.5h-1zM474 177.5h1v2.5h-1zM475 177.5h1v2.5h-1zM476 176.5h1v3.5h-1zM477 177.5h1v2.5h-1zM478 177.5h1v5.5h-1zM479 176.5h1v3.5h-1zM480 177.5h1v4.5h-1zM481 177.5h1v4.5h-1zM482 177.5h1v5h-1zM483 177.5h1v5h-1zM484 176h1v4h-1zM485 177.5h1v2.5h-1zM486 177.5h1v2.5h-1zM487 175.5h1v4.5h-1zM488 177.5h1v2.5h-1zM489 177.5h1v2.5h-1zM490 177.5h1v2.5h-1zM491 177.5h1v2.5h-1zM492 177.5h1v4.5h-1zM493 177.5h1v2.5h-1zM494 177.5h1v5.5h-1zM495 177.5h1v2.5h-1zM496 177.5h1v5h-1zM497 177.5h1v2.5h-1zM498 177.5h1v2.5h-1zM499 177.5h1v2.5h-1zM500 177.5h1v5h-1zM501 177.5h1v2.5h-1zM502 177.5h1v4.5h-1zM503 177.5h1v2.5h-1zM504 177.5h1v2.5h-1zM505 177.5h1v5.5h-1zM506 177.5h1v4.5h-1zM507 177.5h1v5h-1zM508 175.5h1v4.5h-1zM509 177.5h1v4.5h-1zM510 177.5h1v2.5h-1zM511 177.5h1v4.5h-1zM512 177.5h1v2.5h-1zM513 177.5h1v4.5h-1zM514 177.5h1v2.5h-1zM515 176h1v4h-1zM516 177.5h1v5h-1zM517 177.5h1v5.5h-1zM518 177.5h1v4.5h-1zM519 177.5h1v2.5h-1zM520 175.5h1v4.5h-1zM521 177.5h1v2.5h-1zM522 177.5h1v2.5h-1zM523 175.5h1v4.5h-1zM524 177.5h1v4.5h-1zM525 175.5h1v4.5h-1zM526 177.5h1v2.5h-1zM527 177.5h1v2.5h-1zM528 177.5h1v5.5h-1zM529 177.5h1v2.5h-1zM530 177.5h1v5.5h-1zM531 176.5h1v3.5h-1zM532 176h1v4h-1zM533 177.5h1v4.5h-1zM534 175.5h1v4.5h-1zM535 175.5h1v4.5h-1zM536 176.5h1v3.5h-1zM537 177.5h1v4.5h-1zM538 177.5h1v2.5h-1zM539 177.5h1v2.5h-1zM540 177.5h1v2.5h-1zM541 175.5h1v4.5h-1zM542 177.5h1v4.5h-1zM543 177.5h1v5.5h-1zM544 177.5h1v2.5h-1zM545 176.5h1v3.5h-1zM546 177.5h1v5h-1zM547 177.5h1v2.5h-1zM548 177.5h1v2.5h-1zM549 177.5h1v2.5h-1zM550 177.5h1v2.5h-1zM551 176h1v4h-1zM552 176.5h1v3.5h-1zM553 175.5h1v4.5h-1zM554 177.5h1v2.5h-1zM555 177.5h1v5h-1zM556 177.5h1v2.5h-1zM557 177.5h1v5.5h-1zM558 176h1v4h-1zM559 177.5h1v2.5h-1zM560 177.5h1v2.5h-1zM561 176h1v4h-1zM562 177.5h1v2.5h-1zM563 177.5h1v2.5h-1zM564 177.5h1v2.5h-1zM565 177.5h1v5h-1zM566 177.5h1v2.5h-1zM567 177.5h1v4.5h-1zM568 177.5h1v4.5h-1zM569 177.5h1v2.5h-1zM570 177.5h1v2.5h-1zM571 177.5h1v2.5h-1zM572 177.5h1v2.5h-1zM573 177.5h1v2.5h-1zM574 177.5h1v5.5h-1zM575 177.5h1v5.5h-1zM576 177.5h1v4.5h-1zM577 177.5h1v4.5h-1zM578 177.5h1v2.5h-1zM579 177.5h1v5.5h-1zM580 177.5h1v2.5h-1zM581 177.5h1v5.5h-1zM582 175.5h1v4.5h-1zM583 177.5h1v5.5h-1zM584 177.5h1v5h-1zM585 176h1v4h-1zM586 177.5h1v2.5h-1zM587 177.5h1v4.5h-1zM588 175.5h1v4.5h-1zM589 177.5h1v2.5h-1zM590 177.5h1v5.5h-1zM591 177.5h1v2.5h-1zM592 175.5h1v4.5h-1zM593 177.5h1v4.5h-1zM594 177.5h1v2.5h-1zM595 177.5h1v2.5h-1zM596 177.5h1v2.5h-1zM597 177.5h1v2.5h-1zM598 177.5h1v2.5h-1zM599 177.5h1v2.5h-1zM600 177.5h1v2.5h-1zM601 177.5h1v2.5h-1zM602 176h1v4h-1zM603 177.5h1v2.5h-1zM604 177.5h1v4.5h-1zM605 177.5h1v2.5h-1zM606 176.5h1v3.5h-1zM607 177.5h1v5h-1zM608 176h1v4h-1zM609 177.5h1v4.5h-1zM610 175.5h1v4.5h-1zM611 177.5h1v5.5h-1zM612 177.5h1v4.5h-1zM613 177.5h1v2.5h-1zM614 177.5h1v2.5h-1zM615 177.5h1v5h-1zM616 177.5h1v2.5h-1zM617 177.5h1v4.5h-1zM618 177.5h1v5h-1zM619 177.5h1v4.5h-1zM620 177.5h1v2.5h-1zM621 175.5h1v4.5h-1zM622 177.5h1v4.5h-1zM623 177.5h1v2.5h-1zM624 176h1v4h-1zM625 177.5h1v2.5h-1zM626 177.5h1v2.5h-1zM627 177.5h1v2.5h-1zM628 177.5h1v2.5h-1zM629 176h1v4h-1zM630 177.5h1v2.5h-1zM631 177.5h1v5.5h-1zM632 177.5h1v2.5h-1zM633 177.5h1v4.5h-1zM634 176.5h1v3.5h-1zM635 177.5h1v2.5h-1zM636 177.5h1v2.5h-1zM637 175.5h1v4.5h-1zM638 177.5h1v2.5h-1zM639 177.5h1v2.5h-1zM640 177.5h1v2.5h-1zM641 177.5h1v4.5h-1zM642 177.5h1v2.5h-1zM643 177.5h1v2.5h-1zM644 177.5h1v2.5h-1zM645 176.5h1v3.5h-1zM646 177.5h1v2.5h-1zM647 177.5h1v2.5h-1zM648 177.5h1v4.5h-1zM649 177.5h1v2.5h-1zM650 177.5h1v5.5h-1zM651 177.5h1v5.5h-1zM652 177.5h1v2.5h-1zM653 177.5h1v5.5h-1zM654 177.5h1v5.5h-1zM655 177.5h1v2.5h-1zM656 177.5h1v4.5h-1zM657 177.5h1v2.5h-1zM658 177.5h1v5h-1zM659 177.5h1v2.5h-1zM660 177.5h1v2.5h-1zM661 177.5h1v2.5h-1zM662 177.5h1v2.5h-1zM663 177.5h1v5.5h-1zM664 177.5h1v2.5h-1zM665 177.5h1v2.5h-1zM666 177.5h1v4.5h-1zM667 175.5h1v4.5h-1zM668 177.5h1v5h-1zM669 177.5h1v5.5h-1zM670 176h1v4h-1zM671 177.5h1v5h-1zM672 177.5h1v5h-1zM673 177.5h1v5h-1zM674 177.5h1v2.5h-1zM675 176.5h1v149h-1zM676 322.5h1v4.5h-1zM677 322.5h1v2.5h-1zM678 322.5h1v5h-1zM679 322.5h1v2.5h-1zM680 322.5h1v2.5h-1zM681 322.5h1v2.5h-1zM682 322.5h1v5h-1zM683 322.5h1v5h-1zM684 322.5h1v2.5h-1zM685 321h1v4h-1zM686 322.5h1v2.5h-1zM687 321.5h1v3.5h-1zM688 322.5h1v2.5h-1zM689 322.5h1v2.5h-1zM690 322.5h1v2.5h-1zM691 322.5h1v2.5h-1zM692 322.5h1v5.5h-1zM693 320.5h1v4.5h-1zM694 322.5h1v2.5h-1zM695 322.5h1v2.5h-1zM696 322.5h1v2.5h-1zM697 322.5h1v2.5h-1zM698 322.5h1v4.5h-1zM699 322.5h1v5.5h-1zM700 322.5h1v5h-1zM701 322.5h1v2.5h-1zM702 322.5h1v2.5h-1zM703 322.5h1v2.5h-1zM704 322.5h1v5h-1zM705 322.5h1v4.5h-1zM706 322.5h1v2.5h-1zM707 322.5h1v5.5h-1zM708 322.5h1v2.5h-1zM709 322.5h1v5h-1zM710 322.5h1v5h-1zM711 322.5h1v2.5h-1zM712 322.5h1v4.5h-1zM713 322.5h1v4.5h-1zM714 321.5h1v3.5h-1zM715 322.5h1v5h-1zM716 322.5h1v2.5h-1zM717 322.5h1v4.5h-1zM718 322.5h1v2.5h-1zM719 322.5h1v2.5h-1zM720 321h1v4h-1zM721 322.5h1v2.5h-1zM722 322.5h1v2.5h-1zM723 322.5h1v2.5h-1zM724 322.5h1v2.5h-1zM725 322.5h1v4.5h-1zM726 322.5h1v2.5h-1zM727 322.5h1v2.5h-1zM728 322.5h1v5h-1zM729 322.5h1v5h-1zM730 322.5h1v2.5h-1zM731 322.5h1v5h-1zM732 322.5h1v5h-1zM733 322.5h1v2.5h-1zM734 322.5h1v2.5h-1zM735 322.5h1v2.5h-1zM736 322.5h1v5.5h-1zM737 322.5h1v2.5h-1zM738 322.5h1v2.5h-1zM739 322.5h1v5.5h-1zM740 322.5h1v2.5h-1zM741 322.5h1v2.5h-1zM742 322.5h1v5.5h-1zM743 322.5h1v2.5h-1zM744 322.5h1v2.5h-1zM745 322.5h1v2.5h-1zM746 322.5h1v2.5h-1zM747 322.5h1v5.5h-1zM748 322.5h1v4.5h-1zM749 322.5h1v5h-1zM750 322.5h1v2.5h-1zM751 322.5h1v2.5h-1zM752 322.5h1v5h-1zM753 322.5h1v4.5h-1zM754 320.5h1v4.5h-1zM755 322.5h1v5.5h-1zM756 322.5h1v2.5h-1zM757 322.5h1v2.5h-1zM758 322.5h1v2.5h-1zM759 322.5h1v5.5h-1zM760 322.5h1v2.5h-1zM761 322.5h1v2.5h-1zM762 322.5h1v2.5h-1zM763 322.5h1v4.5h-1zM764 322.5h1v5h-1zM765 322.5h1v5.5h-1zM766 321.5h1v3.5h-1zM767 322.5h1v5.5h-1zM768 322.5h1v2.5h-1zM769 321h1v4h-1zM770 322.5h1v5.5h-1zM771 322.5h1v5.5h-1zM772 322.5h1v2.5h-1zM773 322.5h1v2.5h-1zM774 322.5h1v2.5h-1zM775 322.5h1v2.5h-1zM776 322.5h1v2.5h-1zM777 322.5h1v5h-1zM778 321.5h1v3.5h-1zM779 322.5h1v2.5h-1zM780 322.5h1v5h-1zM781 322.5h1v5.5h-1zM782 322.5h1v4.5h-1zM783 322.5h1v2.5h-1zM784 322.5h1v5.5h-1zM785 322.5h1v2.5h-1zM786 322.5h1v2.5h-1zM787 322.5h1v2.5h-1zM788 321h1v4h-1zM789 322.5h1v2.5h-1zM790 321h1v4h-1zM791 322.5h1v2.5h-1zM792 322.5h1v2.5h-1zM793 322.5h1v2.5h-1zM794 321h1v4h-1zM795 321h1v4h-1zM796 322.5h1v2.5h-1zM797 322.5h1v2.5h-1zM798 321h1v4h-1zM799 322.5h1v4.5h-1zM800 322.5h1v2.5h-1zM801 322.5h1v2.5h-1zM802 322.5h1v2.5h-1zM803 321.5h1v3.5h-1zM804 322.5h1v4.5h-1zM805 322.5h1v5.5h-1zM806 322.5h1v2.5h-1zM807 322.5h1v2.5h-1zM808 322.5h1v2.5h-1zM809 322.5h1v2.5h-1zM810 322.5h1v5.5h-1zM811 322.5h1v2.5h-1zM812 322.5h1v5h-1zM813 322.5h1v5h-1zM814 322.5h1v2.5h-1zM815 321.5h1v3.5h-1zM816 322.5h1v2.5h-1zM817 322.5h1v5h-1zM818 322.5h1v2.5h-1zM819 322.5h1v2.5h-1zM820 322.5h1v2.5h-1zM821 322.5h1v2.5h-1zM822 322.5h1v2.5h-1zM823 322.5h1v2.5h-1zM824 320.5h1v4.5h-1zM825 321.5h1v3.5h-1zM826 322.5h1v5.5h-1zM827 321.5h1v3.5h-1zM828 322.5h1v2.5h-1zM829 322.5h1v4.5h-1zM830 322.5h1v5.5h-1zM831 322.5h1v2.5h-1zM832 321h1v4h-1zM833 322.5h1v5h-1zM834 322.5h1v4.5h-1zM835 322.5h1v5h-1zM836 322.5h1v2.5h-1zM837 321h1v4h-1zM838 322.5h1v2.5h-1zM839 322.5h1v5h-1zM840 322.5h1v5h-1zM841 322.5h1v5h-1zM842 322.5h1v5h-1zM843 322.5h1v2.5h-1zM844 322.5h1v5.5h-1zM845 322.5h1v2.5h-1zM846 322.5h1v5h-1zM847 322.5h1v2.5h-1zM848 322.5h1v5.5h-1zM849 322.5h1v2.5h-1zM850 322.5h1v2.5h-1zM851 322.5h1v5.5h-1zM852 322.5h1v4.5h-1zM853 322.5h1v2.5h-1zM854 322.5h1v5h-1zM855 322.5h1v2.5h-1zM856 322.5h1v5h-1zM857 322.5h1v2.5h-1zM858 322.5h1v5.5h-1zM859 322.5h1v2.5h-1zM860 322.5h1v2.5h-1zM861 321.5h1v3.5h-1zM862 322.5h1v5h-1zM863 322.5h1v5.5h-1zM864 322.5h1v4.5h-1zM865 322.5h1v2.5h-1zM866 322.5h1v2.5h-1zM867 322.5h1v5h-1zM868 320.5h1v4.5h-1zM869 322.5h1v2.5h-1zM870 322.5h1v5.5h-1zM871 322.5h1v5h-1zM872 322.5h1v2.5h-1zM873 322.5h1v4.5h-1zM874 322.5h1v5.5h-1zM875 322.5h1v2.5h-1zM876 321.5h1v3.5h-1zM877 320.5h1v4.5h-1zM878 322.5h1v4.5h-1zM879 322.5h1v5.5h-1zM880 322.5h1v5h-1zM881 320.5h1v4.5h-1zM882 322.5h1v5h-1zM883 322.5h1v2.5h-1zM884 322.5h1v4.5h-1zM885 322.5h1v5.5h-1zM886 322.5h1v4.5h-1zM887 322.5h1v2.5h-1zM888 322.5h1v5h-1zM889 322.5h1v2.5h-1zM890 322.5h1v2.5h-1zM891 322.5h1v5h-1zM892 322.5h1v4.5h-1zM893 322.5h1v2.5h-1zM894 322.5h1v2.5h-1zM895 322.5h1v5.5h-1zM896 321.5h1v3.5h-1zM897 322.5h1v2.5h-1zM898 322.5h1v2.5h-1zM899 322.5h1v2.5h-1zM900 322.5h1v2.5h-1zM901 322.5h1v2.5h-1zM902 322.5h1v2.5h-1zM903 322.5h1v4.5h-1zM904 322.5h1v5h-1zM905 322.5h1v5h-1zM906 322.5h1v2.5h-1zM907 322.5h1v5.5h-1zM908 322.5h1v2.5h-1zM909 322.5h1v5h-1zM910 322.5h1v2.5h-1zM911 322.5h1v2.5h-1zM912 322.5h1v2.5h-1zM913 322.5h1v4.5h-1zM914 322.5h1v2.5h-1zM915 322.5h1v2.5h-1zM916 322.5h1v2.5h-1zM917 322.5h1v2.5h-1zM918 322.5h1v4.5h-1zM919 322.5h1v2.5h-1zM920 322.5h1v2.5h-1zM921 322.5h1v2.5h-1zM922 322.5h1v2.5h-1zM923 322.5h1v2.5h-1zM924 322.5h1v2.5h-1zM925 322.5h1v4.5h-1zM926 322.5h1v2.5h-1zM927 322.5h1v2.5h-1zM928 322.5h1v2.5h-1zM929 322.5h1v2.5h-1zM930 322.5h1v4.5h-1zM931 322.5h1v5h-1zM932 322.5h1v5h-1zM933 322.5h1v2.5h-1zM284.5 290h1.5v35h-1.5zM674 177h2v148h-2z" fill="#eae620"/>
<!-- cursors -->
<rect x="284.5" y="25" width="1.1" height="596" fill="#6a1a7c" opacity="0.75"/>
<rect x="352.5" y="25" width="1.1" height="596" fill="#6a1a7c" opacity="0.75"/>
<line x1="285" y1="25" x2="285" y2="621" stroke="#b838c8" stroke-width="1.1" stroke-opacity="0.85" stroke-dasharray="6 3.6"/>
<line x1="353" y1="25" x2="353" y2="621" stroke="#b838c8" stroke-width="1.1" stroke-opacity="0.85" stroke-dasharray="6 3.6"/>
<!-- ch2 marker -->
<path d="M0.8 314h16l6 10l-6 10h-16z" fill="#000" stroke="#d8e030" stroke-width="1.6"/>
<text x="4" y="330" fill="#e8e828" style="font-size:16px;letter-spacing:0">2</text>
<!-- measurement box -->
<rect x="31" y="511" width="224" height="110.5" rx="4" fill="#000" stroke="#88b8c4" stroke-width="2"/>
<text x="40" y="531" fill="#f2f2f2" stroke="#000" stroke-width="0.3" xml:space="preserve">△x:0.114s</text>
<text x="40" y="557" fill="#f2f2f2" stroke="#000" stroke-width="0.3" xml:space="preserve">1/△x:8.772HZ</text>
<text x="40" y="585" fill="#f2f2f2" stroke="#000" stroke-width="0.3" xml:space="preserve">x1:88.00ms</text>
<text x="40" y="612" fill="#f2f2f2" stroke="#000" stroke-width="0.3" xml:space="preserve">x2:-26.00ms</text>
<!-- bottom left -->
<rect x="0" y="622.5" width="384" height="97.5" fill="#64aac4"/>
<rect x="1.5" y="623.5" width="248" height="23" rx="5" fill="#000"/>
<rect x="1.5" y="648.5" width="248" height="21.5" rx="5" fill="#000"/>
<rect x="254" y="624" width="126.5" height="46" rx="6" fill="#000"/>
<rect x="1.5" y="673" width="380.5" height="44.5" rx="5" fill="#000"/>
<circle cx="12.3" cy="636" r="9.6" fill="#ec0606"/>
<path d="M9.6 632.8L13 629.8V641.8" fill="none" stroke="#1a0000" stroke-width="2.4"/>
<text x="22" y="643" fill="#d81a1a" stroke="#000" stroke-width="0.3" xml:space="preserve">5V-</text>
<text x="126" y="643" fill="#d81a1a" stroke="#000" stroke-width="0.3" xml:space="preserve">0.00div</text>
<circle cx="12.3" cy="659.5" r="9.6" fill="#e6e220"/>
<text x="12.3" y="665.7" fill="#101000" text-anchor="middle" style="font-family:'Liberation Sans',sans-serif;font-weight:bold;font-size:17px;letter-spacing:0">2</text>
<text x="22" y="667" fill="#e0e040" stroke="#000" stroke-width="0.3" xml:space="preserve">2V-</text>
<text x="126" y="667" fill="#e0e040" stroke="#000" stroke-width="0.3" xml:space="preserve">0.00div</text>
<text x="276" y="641" fill="#f2f2f2" stroke="#000" stroke-width="0.3" xml:space="preserve">(5KS/s)</text>
<text x="261" y="664" fill="#f2f2f2" stroke="#000" stroke-width="0.3" xml:space="preserve">Depth:10K</text>
<circle cx="11.5" cy="684" r="9.6" fill="#e6e220"/>
<text x="11.5" y="690.2" fill="#101000" text-anchor="middle" style="font-family:'Liberation Sans',sans-serif;font-weight:bold;font-size:17px;letter-spacing:0">2</text>
<text x="26" y="690" fill="#e2e244" stroke="#000" stroke-width="0.3" xml:space="preserve">F:  ?</text>
<circle cx="11.5" cy="706.3" r="9.6" fill="#e6e220"/>
<text x="11.5" y="712.5" fill="#101000" text-anchor="middle" style="font-family:'Liberation Sans',sans-serif;font-weight:bold;font-size:17px;letter-spacing:0">2</text>
<text x="26" y="712.5" fill="#e2e244" stroke="#000" stroke-width="0.3" xml:space="preserve">+D:97.8%</text>
<circle cx="201.8" cy="684" r="9.6" fill="#e6e220"/>
<text x="201.8" y="690.2" fill="#101000" text-anchor="middle" style="font-family:'Liberation Sans',sans-serif;font-weight:bold;font-size:17px;letter-spacing:0">2</text>
<text x="217.5" y="690" fill="#e2e244" stroke="#000" stroke-width="0.3" xml:space="preserve">Vk:3.037v</text>
<circle cx="201.8" cy="706.3" r="9.6" fill="#e6e220"/>
<text x="201.8" y="712.5" fill="#101000" text-anchor="middle" style="font-family:'Liberation Sans',sans-serif;font-weight:bold;font-size:17px;letter-spacing:0">2</text>
<text x="217.5" y="712.5" fill="#e2e244" stroke="#000" stroke-width="0.3" xml:space="preserve">V:1.954v</text>
<!-- menu -->
<rect x="384" y="645" width="572" height="73" fill="#0360a6"/>
<rect x="384" y="644.5" width="572" height="1.5" fill="#0458a0"/>
<rect x="382" y="622.5" width="2.5" height="97.5" fill="#0a58b0"/>
<rect x="384" y="624.2" width="118" height="20.6" rx="10.3" fill="#000"/>
<text x="399" y="641" fill="#f2f2f2" stroke="#000" stroke-width="0.3" xml:space="preserve">M:100ms</text>
<rect x="798" y="623.6" width="154" height="21.2" rx="10.6" fill="#000"/>
<circle cx="810" cy="634.3" r="9.5" fill="#ec0606"/>
<path d="M807.2 631.6L810.6 628.6V640.4" fill="none" stroke="#1a0000" stroke-width="2.3"/>
<path d="M822 642.3H832.6L837 627.2H845.8" fill="none" stroke="#e4e4e4" stroke-width="1.5"/>
<text x="849" y="642" fill="#f2f2f2" stroke="#000" stroke-width="0.3" xml:space="preserve">10.0V</text>
<rect x="385" y="648" width="110" height="68" rx="3" fill="#003a92"/><rect x="386" y="649" width="106" height="64" rx="3" fill="#4aa6f2"/><rect x="388" y="651" width="104" height="62" rx="1" fill="#0080e0"/>
<text x="415" y="674" fill="#041a48" stroke="#041a48" stroke-width="0.5" xml:space="preserve">Type</text>
<rect x="409" y="685" width="60" height="24" fill="#e2e2e2"/>
<text x="409" y="705" fill="#101010" stroke="#000" stroke-width="0" xml:space="preserve">Image</text>
<rect x="715" y="648" width="110" height="68" rx="3" fill="#003a92"/><rect x="716" y="649" width="106" height="64" rx="3" fill="#4aa6f2"/><rect x="718" y="651" width="104" height="62" rx="1" fill="#0080e0"/>
<text x="744" y="688" fill="#041a48" stroke="#000" stroke-width="0" xml:space="preserve">Save</text>
</svg>
</body></html>
